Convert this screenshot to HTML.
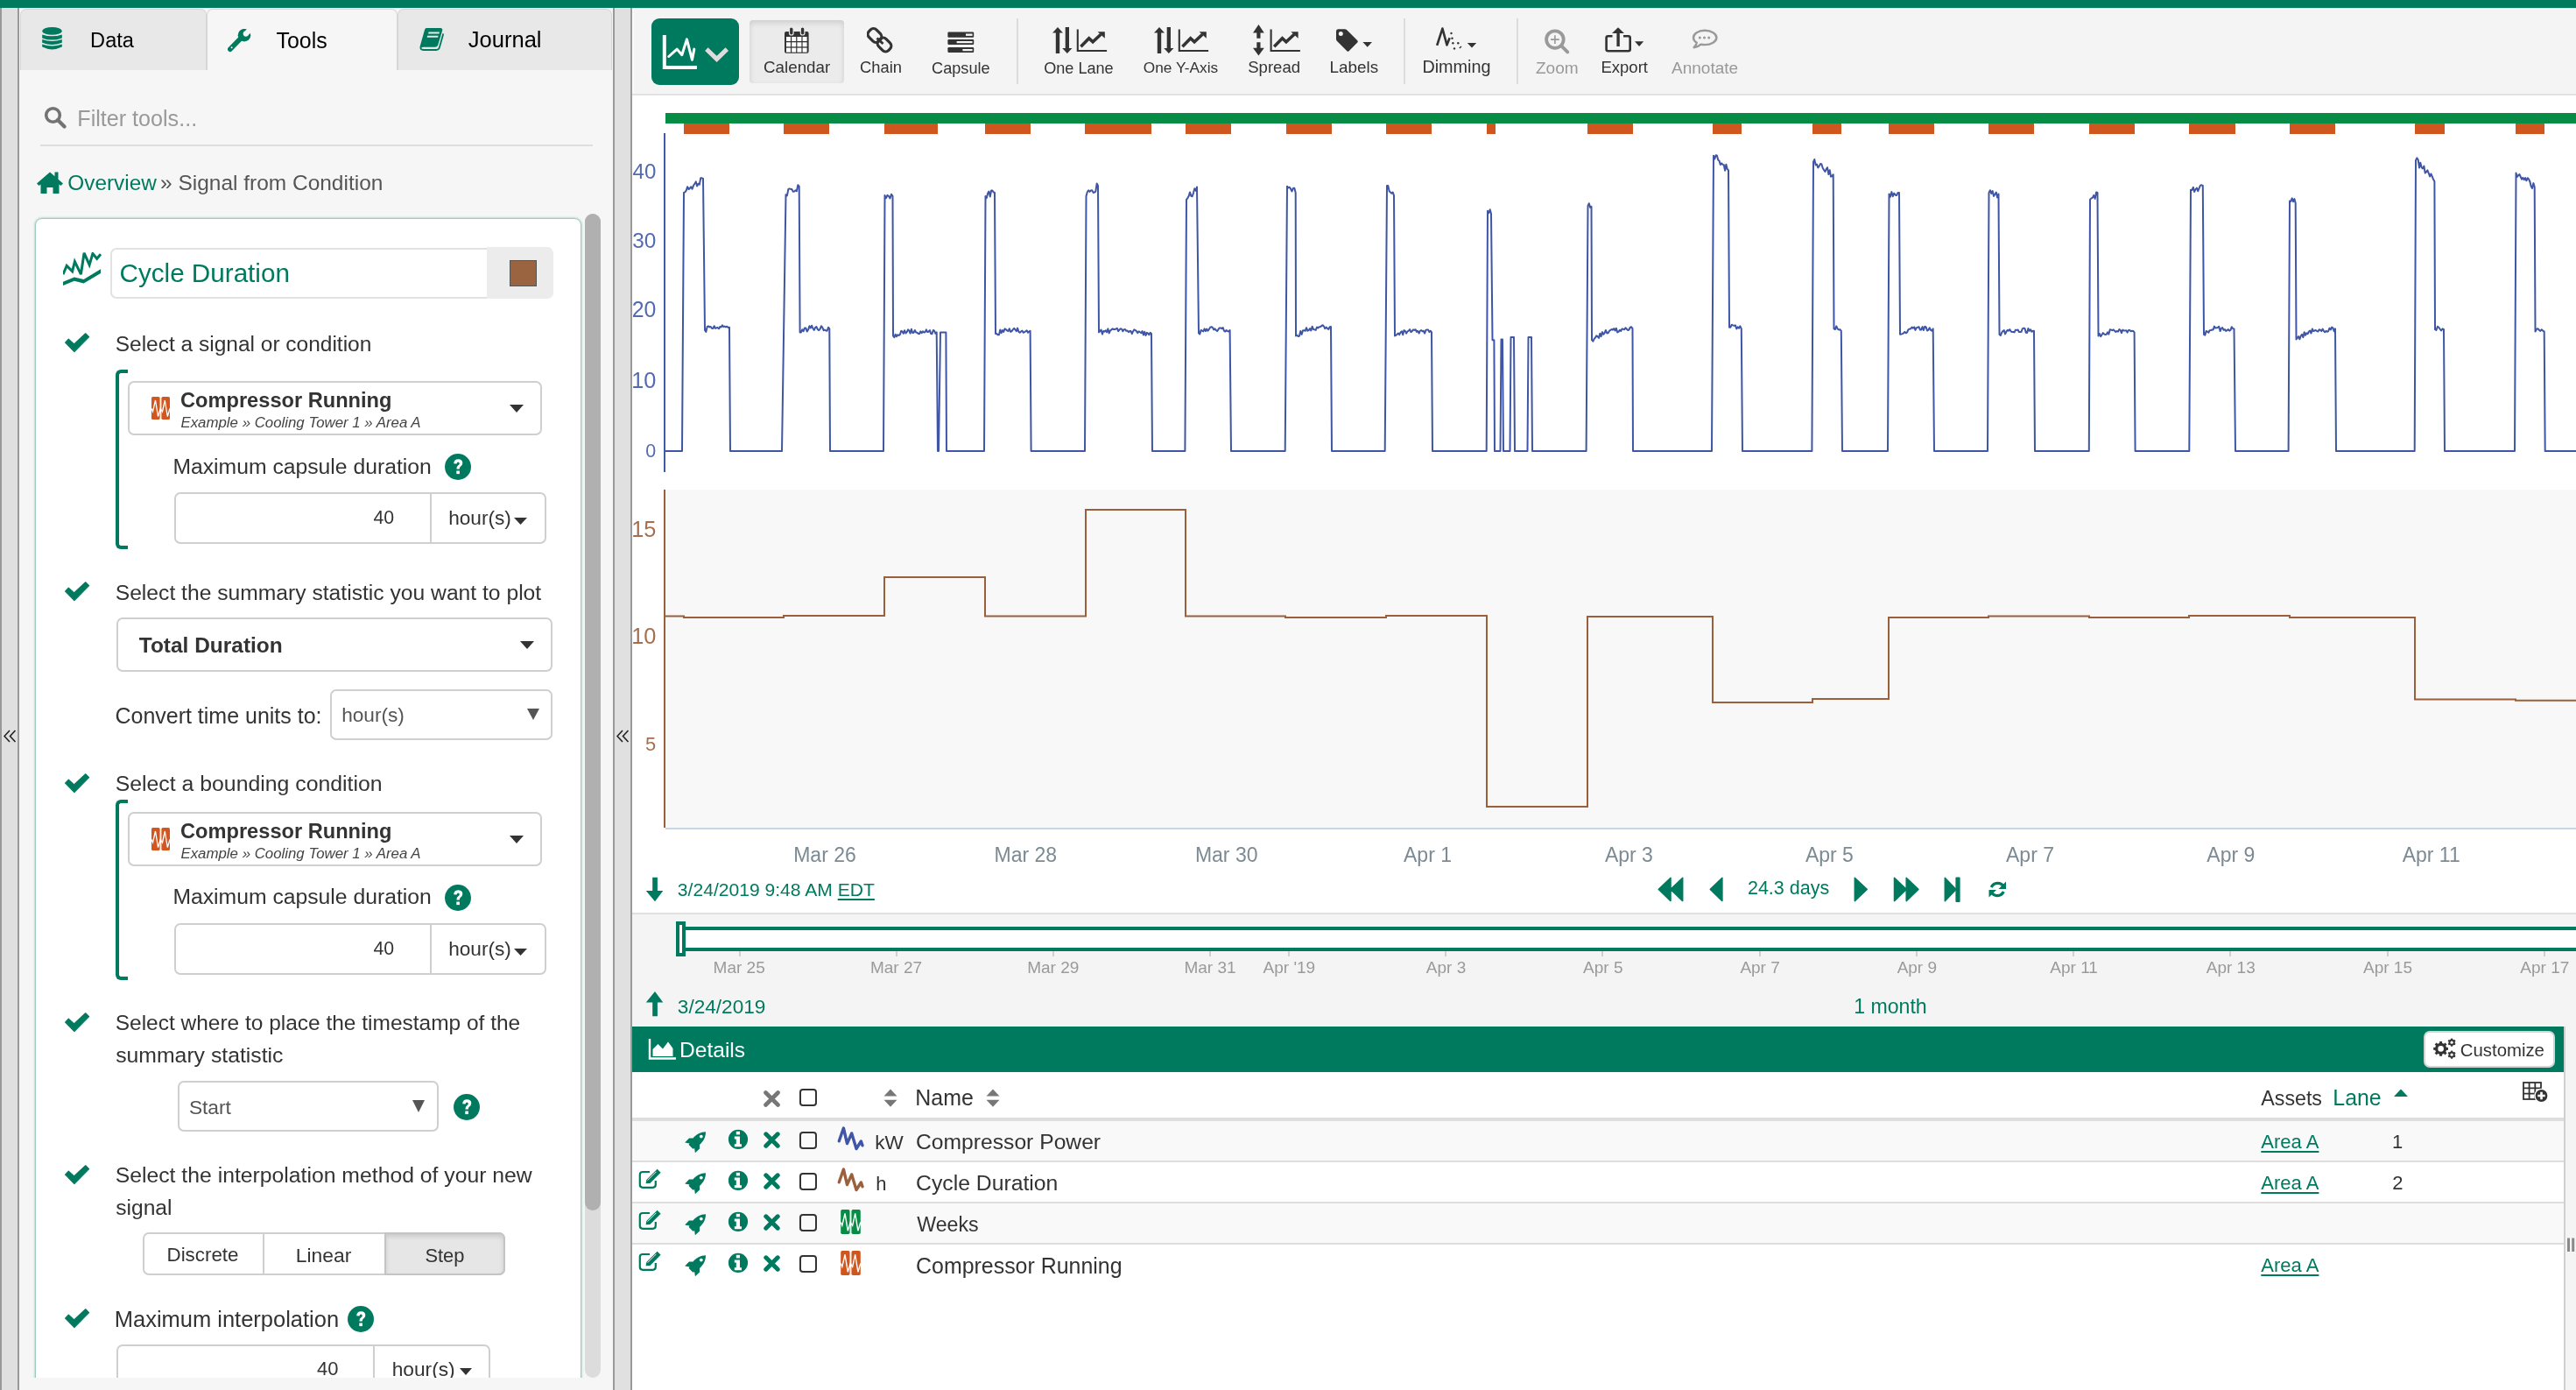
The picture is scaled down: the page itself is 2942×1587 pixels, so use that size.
<!DOCTYPE html>
<html><head><meta charset="utf-8"><title>Seeq</title>
<style>
html,body{margin:0;padding:0;}
body{width:2942px;height:1587px;overflow:hidden;position:relative;background:#fff;font-family:"Liberation Sans",sans-serif;}
</style></head><body>
<div style="position:absolute;left:0;top:0;width:2942px;height:1587px;will-change:transform;">
<div style="position:absolute;left:0px;top:0px;width:2942px;height:9px;background:#007a5e;"></div>
<div style="position:absolute;left:0px;top:9px;width:22px;height:1578px;background:#e0e0e0;border-left:2px solid #999;border-right:2px solid #999;box-sizing:border-box;"></div>
<svg style="position:absolute;left:4px;top:833px;" width="15" height="15" viewBox="0 0 15 15"><path d="M7 1 L1 7.5 L7 14 M13.5 1 L7.5 7.5 L13.5 14" fill="none" stroke="#222" stroke-width="1.6"/></svg>
<div style="position:absolute;left:22px;top:9px;width:678px;height:1578px;background:#f6f6f6;"></div>
<div style="position:absolute;left:700px;top:9px;width:22px;height:1578px;background:#e0e0e0;border-left:2px solid #999;border-right:2px solid #999;box-sizing:border-box;"></div>
<svg style="position:absolute;left:704px;top:833px;" width="15" height="15" viewBox="0 0 15 15"><path d="M7 1 L1 7.5 L7 14 M13.5 1 L7.5 7.5 L13.5 14" fill="none" stroke="#222" stroke-width="1.6"/></svg>
<div style="position:absolute;left:23px;top:10px;width:213px;height:71px;box-sizing:border-box;background:#e8e8e8;border:1px solid #d6d6d6;border-bottom:none;border-radius:7px 7px 0 0;"></div>
<div style="position:absolute;left:236px;top:10px;width:218px;height:71px;box-sizing:border-box;background:#f6f6f6;border:1px solid #d6d6d6;border-bottom:none;border-radius:7px 7px 0 0;"></div>
<div style="position:absolute;left:454px;top:10px;width:245px;height:71px;box-sizing:border-box;background:#e8e8e8;border:1px solid #d6d6d6;border-bottom:none;border-radius:7px 7px 0 0;"></div>
<div style="position:absolute;left:23px;top:80px;width:676px;height:2px;background:#f6f6f6;"></div>
<svg style="position:absolute;left:48px;top:31px;" width="23" height="27" viewBox="0 0 23 27"><ellipse cx="11.5" cy="4.4" rx="11.3" ry="4.3" fill="#007a5e"/><path d="M0.2 8.4 Q11.5 12.2 22.8 8.4 L22.8 12.4 Q11.5 16.8 0.2 12.4Z" fill="#007a5e"/><path d="M0.2 14 Q11.5 17.8 22.8 14 L22.8 17.8 Q11.5 22.2 0.2 17.8Z" fill="#007a5e"/><path d="M0.2 19.6 Q11.5 23.4 22.8 19.6 L22.8 22.6 Q11.5 28.2 0.2 22.6Z" fill="#007a5e"/></svg>
<div style="position:absolute;left:103.11px;top:35.04px;font-family:'Liberation Sans', sans-serif;font-size:23.57px;line-height:1;white-space:pre;color:#000;font-weight:normal;font-style:normal;">Data</div>
<svg style="position:absolute;left:260px;top:33px;overflow:hidden;" width="28" height="27" viewBox="0 0 28 27"><circle cx="19" cy="7.2" r="7.3" fill="#007a5e"/><circle cx="20.8" cy="5.6" r="3.1" fill="#f6f6f6"/><path d="M20.8 5.6 L28 -1.6" stroke="#f6f6f6" stroke-width="6"/><path d="M14 11.8 L2.8 23.2" stroke="#007a5e" stroke-width="5.6" stroke-linecap="round"/><circle cx="4.6" cy="21.2" r="1" fill="#f6f6f6"/></svg>
<div style="position:absolute;left:315.50px;top:33.88px;font-family:'Liberation Sans', sans-serif;font-size:24.95px;line-height:1;white-space:pre;color:#000;font-weight:normal;font-style:normal;">Tools</div>
<svg style="position:absolute;left:479px;top:32px;" width="29" height="26" viewBox="0 0 29 26"><path d="M8 0 L24.5 0 Q27 0.5 26 3.5 L21 20 Q20 21.8 18 21.8 L4 21.8 Q2 22 2.3 23.2 Q3 24 5 24 L19.5 24 Q21.5 24 22 22 L26.5 6 Q27.5 5.5 28 7.5 L23.5 23.2 Q22.3 26 19.5 26 L4.5 26 Q0 25.5 0.5 21.5 L6 2 Q6.6 0 8 0Z" fill="#007a5e"/><path d="M10.6 4.5 L23 4.5 L22.4 6.5 L10 6.5Z M9.2 8.7 L21.6 8.7 L21 10.7 L8.6 10.7Z" fill="#e8e8e8"/></svg>
<div style="position:absolute;left:534.74px;top:33.36px;font-family:'Liberation Sans', sans-serif;font-size:25.56px;line-height:1;white-space:pre;color:#000;font-weight:normal;font-style:normal;">Journal</div>
<svg style="position:absolute;left:50px;top:121px;" width="26" height="26" viewBox="0 0 26 26"><circle cx="10.5" cy="10.5" r="7.8" fill="none" stroke="#737373" stroke-width="3.6"/><path d="M16 16 L23.5 23.5" stroke="#737373" stroke-width="4.2" stroke-linecap="round"/></svg>
<div style="position:absolute;left:88.29px;top:122.72px;font-family:'Liberation Sans', sans-serif;font-size:25.14px;line-height:1;white-space:pre;color:#999;font-weight:normal;font-style:normal;">Filter tools...</div>
<div style="position:absolute;left:46px;top:165px;width:631px;height:2px;background:#dedede;"></div>
<svg style="position:absolute;left:41px;top:195px;" width="32" height="27" viewBox="0 0 32 27"><path d="M16 1.5 L1 14.5 L3.5 17 L5.5 15.4 L5.5 26 L12.5 26 L12.5 19 L19.5 19 L19.5 26 L26.5 26 L26.5 15.4 L28.5 17 L31 14.5 L25.5 9.7 L25.5 1.5 L21.5 1.5 L21.5 6.2Z" fill="#007a5e"/></svg>
<div style="position:absolute;left:77.33px;top:196.69px;font-family:'Liberation Sans', sans-serif;font-size:24.35px;line-height:1;white-space:pre;color:#007a5e;font-weight:normal;font-style:normal;">Overview</div>
<div style="position:absolute;left:183.02px;top:196.59px;font-family:'Liberation Sans', sans-serif;font-size:24.47px;line-height:1;white-space:pre;color:#555;font-weight:normal;font-style:normal;">» Signal from Condition</div>
<div style="position:absolute;left:0;top:0;width:2942px;height:1587px;clip-path:inset(240px 2242px 14px 22px);">
<div style="position:absolute;left:40px;top:249px;width:624px;height:1351px;box-sizing:border-box;background:#fff;border:1.5px solid #9bcdbf;border-radius:8px;box-shadow:0 0 2px 1px rgba(0,122,94,.22);"></div>
<div style="position:absolute;left:668px;top:244px;width:18px;height:1329px;box-sizing:border-box;background:#dcdcdc;border-radius:9px;"></div>
<div style="position:absolute;left:668px;top:244px;width:18px;height:1138px;box-sizing:border-box;background:#b0b0b0;border-radius:9px;"></div>
<svg style="position:absolute;left:72px;top:288px;" width="44" height="39" viewBox="0 0 44 39"><path d="M0 25.2 L4.2 15.4 L10.6 21.9 L13.4 10.6 L20.4 25.2 L24.1 0.8 L30.1 14.4 L33.9 1.6 L38.7 7.3 L43 2.2" fill="none" stroke="#007a5e" stroke-width="3" stroke-linejoin="miter" stroke-miterlimit="3"/><path d="M0 33.8 L12.8 28.4 L23.6 31.1 L43 19.2 L43 24 L23.6 35.4 L12.8 32.7 L0 38.1Z" fill="#007a5e"/></svg>
<div style="position:absolute;left:126px;top:283px;width:432px;height:58px;box-sizing:border-box;background:#fff;border:2px solid #e2e2e2;border-right:none;border-radius:7px 0 0 7px;"></div>
<div style="position:absolute;left:136.52px;top:297.40px;font-family:'Liberation Sans', sans-serif;font-size:29.65px;line-height:1;white-space:pre;color:#007a5e;font-weight:normal;font-style:normal;">Cycle Duration</div>
<div style="position:absolute;left:556px;top:282px;width:76px;height:59px;box-sizing:border-box;background:#ececec;border-radius:0 7px 7px 0;"></div>
<div style="position:absolute;left:582px;top:297px;width:31px;height:30px;box-sizing:border-box;background:#9b6441;border:1.5px solid #555;"></div>
<svg style="position:absolute;left:74px;top:380px;" width="29" height="23" viewBox="0 0 29 23"><path d="M0.6 11.1 L4.3 7.2 L10.6 13 L23.7 0.8 L27.6 4.6 L10.9 21.6Z" fill="#007a5e" stroke="#007a5e" stroke-width="1.2" stroke-linejoin="round"/></svg>
<div style="position:absolute;left:131.72px;top:381.07px;font-family:'Liberation Sans', sans-serif;font-size:24.49px;line-height:1;white-space:pre;color:#333;font-weight:normal;font-style:normal;">Select a signal or condition</div>
<div style="position:absolute;left:132px;top:421.5px;width:14px;height:205.5px;box-sizing:border-box;border:4px solid #007a5e;border-right:none;border-radius:6px 0 0 6px;"></div>
<div style="position:absolute;left:145.6px;top:435px;width:473.4px;height:62px;box-sizing:border-box;background:#fff;border:2px solid #cfcfcf;border-radius:7px;"></div>
<svg style="position:absolute;left:173px;top:453px;overflow:visible;" width="21" height="26" viewBox="0 0 21 26"><rect x="0" y="0" width="9.6" height="26" rx="1.6" fill="#d2561e"/><rect x="11.4" y="0" width="9.6" height="26" rx="1.6" fill="#d2561e"/><path d="M0 13.5 L1.5 17 L4.5 4 L7.5 22.5 L10.2 13.5 L12.5 17 L15.3 4 L18.3 22.5 L21 13.5" fill="none" stroke="#fff" stroke-width="1.3"/></svg>
<div style="position:absolute;left:206.06px;top:445.81px;font-family:'Liberation Sans', sans-serif;font-size:23.61px;line-height:1;white-space:pre;color:#333;font-weight:bold;font-style:normal;">Compressor Running</div>
<div style="position:absolute;left:206.49px;top:475.35px;font-family:'Liberation Sans', sans-serif;font-size:16.84px;line-height:1;white-space:pre;color:#444;font-weight:normal;font-style:italic;">Example » Cooling Tower 1 » Area A</div>
<svg style="position:absolute;left:582px;top:461.5px;" width="16" height="9" viewBox="0 0 16 9"><path d="M0 0 L16 0 L8.0 9Z" fill="#333"/></svg>
<div style="position:absolute;left:197.42px;top:521.48px;font-family:'Liberation Sans', sans-serif;font-size:24.72px;line-height:1;white-space:pre;color:#333;font-weight:normal;font-style:normal;">Maximum capsule duration</div>
<svg style="position:absolute;left:508px;top:518px;" width="30" height="30" viewBox="0 0 30 30"><circle cx="15" cy="15" r="15" fill="#007a5e"/><path d="M10.2 11.2 Q10.5 6.3 15.3 6.3 Q20.3 6.5 20.3 10.8 Q20.3 13.6 17.6 15 Q16.8 15.5 16.8 17.5 L13.4 17.5 Q13.3 14.2 15.6 13 Q16.8 12.3 16.8 11 Q16.6 9.5 15.2 9.5 Q13.7 9.6 13.6 11.4Z" fill="#fff"/><rect x="13.3" y="19.5" width="3.6" height="3.6" fill="#fff"/></svg>
<div style="position:absolute;left:199px;top:562px;width:425px;height:59px;box-sizing:border-box;background:#fff;border:2px solid #cfcfcf;border-radius:7px;"></div>
<div style="position:absolute;left:491px;top:562px;width:2px;height:59px;background:#cfcfcf;"></div>
<div style="position:absolute;left:426.47px;top:581.17px;font-family:'Liberation Sans', sans-serif;font-size:21.30px;line-height:1;white-space:pre;color:#333;font-weight:normal;font-style:normal;">40</div>
<div style="position:absolute;left:512.14px;top:580.02px;font-family:'Liberation Sans', sans-serif;font-size:22.66px;line-height:1;white-space:pre;color:#333;font-weight:normal;font-style:normal;">hour(s)</div>
<svg style="position:absolute;left:587px;top:590.5px;" width="15" height="8" viewBox="0 0 15 8"><path d="M0 0 L15 0 L7.5 8Z" fill="#333"/></svg>
<svg style="position:absolute;left:74px;top:663.5px;" width="29" height="23" viewBox="0 0 29 23"><path d="M0.6 11.1 L4.3 7.2 L10.6 13 L23.7 0.8 L27.6 4.6 L10.9 21.6Z" fill="#007a5e" stroke="#007a5e" stroke-width="1.2" stroke-linejoin="round"/></svg>
<div style="position:absolute;left:131.71px;top:664.72px;font-family:'Liberation Sans', sans-serif;font-size:24.67px;line-height:1;white-space:pre;color:#333;font-weight:normal;font-style:normal;">Select the summary statistic you want to plot</div>
<div style="position:absolute;left:133px;top:705px;width:498px;height:62px;box-sizing:border-box;background:#fff;border:2px solid #cfcfcf;border-radius:7px;"></div>
<div style="position:absolute;left:158.76px;top:724.89px;font-family:'Liberation Sans', sans-serif;font-size:24.47px;line-height:1;white-space:pre;color:#333;font-weight:bold;font-style:normal;">Total Duration</div>
<svg style="position:absolute;left:594px;top:732px;" width="16" height="9" viewBox="0 0 16 9"><path d="M0 0 L16 0 L8.0 9Z" fill="#333"/></svg>
<div style="position:absolute;left:131.45px;top:804.64px;font-family:'Liberation Sans', sans-serif;font-size:24.99px;line-height:1;white-space:pre;color:#333;font-weight:normal;font-style:normal;">Convert time units to:</div>
<div style="position:absolute;left:377px;top:787px;width:254px;height:58px;box-sizing:border-box;background:#fff;border:2px solid #cfcfcf;border-radius:7px;"></div>
<div style="position:absolute;left:390.14px;top:805.32px;font-family:'Liberation Sans', sans-serif;font-size:22.66px;line-height:1;white-space:pre;color:#555;font-weight:normal;font-style:normal;">hour(s)</div>
<svg style="position:absolute;left:601.5px;top:809px;" width="14" height="13" viewBox="0 0 14 13"><path d="M0 0 L14 0 L7.0 13Z" fill="#555"/></svg>
<svg style="position:absolute;left:74px;top:883px;" width="29" height="23" viewBox="0 0 29 23"><path d="M0.6 11.1 L4.3 7.2 L10.6 13 L23.7 0.8 L27.6 4.6 L10.9 21.6Z" fill="#007a5e" stroke="#007a5e" stroke-width="1.2" stroke-linejoin="round"/></svg>
<div style="position:absolute;left:131.71px;top:882.99px;font-family:'Liberation Sans', sans-serif;font-size:24.82px;line-height:1;white-space:pre;color:#333;font-weight:normal;font-style:normal;">Select a bounding condition</div>
<div style="position:absolute;left:132px;top:913.3px;width:14px;height:205.70000000000005px;box-sizing:border-box;border:4px solid #007a5e;border-right:none;border-radius:6px 0 0 6px;"></div>
<div style="position:absolute;left:145.6px;top:927px;width:473.4px;height:62px;box-sizing:border-box;background:#fff;border:2px solid #cfcfcf;border-radius:7px;"></div>
<svg style="position:absolute;left:173px;top:945px;overflow:visible;" width="21" height="26" viewBox="0 0 21 26"><rect x="0" y="0" width="9.6" height="26" rx="1.6" fill="#d2561e"/><rect x="11.4" y="0" width="9.6" height="26" rx="1.6" fill="#d2561e"/><path d="M0 13.5 L1.5 17 L4.5 4 L7.5 22.5 L10.2 13.5 L12.5 17 L15.3 4 L18.3 22.5 L21 13.5" fill="none" stroke="#fff" stroke-width="1.3"/></svg>
<div style="position:absolute;left:206.06px;top:937.81px;font-family:'Liberation Sans', sans-serif;font-size:23.61px;line-height:1;white-space:pre;color:#333;font-weight:bold;font-style:normal;">Compressor Running</div>
<div style="position:absolute;left:206.49px;top:967.35px;font-family:'Liberation Sans', sans-serif;font-size:16.84px;line-height:1;white-space:pre;color:#444;font-weight:normal;font-style:italic;">Example » Cooling Tower 1 » Area A</div>
<svg style="position:absolute;left:582px;top:953.5px;" width="16" height="9" viewBox="0 0 16 9"><path d="M0 0 L16 0 L8.0 9Z" fill="#333"/></svg>
<div style="position:absolute;left:197.42px;top:1012.28px;font-family:'Liberation Sans', sans-serif;font-size:24.72px;line-height:1;white-space:pre;color:#333;font-weight:normal;font-style:normal;">Maximum capsule duration</div>
<svg style="position:absolute;left:508px;top:1010px;" width="30" height="30" viewBox="0 0 30 30"><circle cx="15" cy="15" r="15" fill="#007a5e"/><path d="M10.2 11.2 Q10.5 6.3 15.3 6.3 Q20.3 6.5 20.3 10.8 Q20.3 13.6 17.6 15 Q16.8 15.5 16.8 17.5 L13.4 17.5 Q13.3 14.2 15.6 13 Q16.8 12.3 16.8 11 Q16.6 9.5 15.2 9.5 Q13.7 9.6 13.6 11.4Z" fill="#fff"/><rect x="13.3" y="19.5" width="3.6" height="3.6" fill="#fff"/></svg>
<div style="position:absolute;left:199px;top:1054px;width:425px;height:59px;box-sizing:border-box;background:#fff;border:2px solid #cfcfcf;border-radius:7px;"></div>
<div style="position:absolute;left:491px;top:1054px;width:2px;height:59px;background:#cfcfcf;"></div>
<div style="position:absolute;left:426.47px;top:1073.17px;font-family:'Liberation Sans', sans-serif;font-size:21.30px;line-height:1;white-space:pre;color:#333;font-weight:normal;font-style:normal;">40</div>
<div style="position:absolute;left:512.14px;top:1072.02px;font-family:'Liberation Sans', sans-serif;font-size:22.66px;line-height:1;white-space:pre;color:#333;font-weight:normal;font-style:normal;">hour(s)</div>
<svg style="position:absolute;left:587px;top:1082.5px;" width="15" height="8" viewBox="0 0 15 8"><path d="M0 0 L15 0 L7.5 8Z" fill="#333"/></svg>
<svg style="position:absolute;left:74px;top:1156px;" width="29" height="23" viewBox="0 0 29 23"><path d="M0.6 11.1 L4.3 7.2 L10.6 13 L23.7 0.8 L27.6 4.6 L10.9 21.6Z" fill="#007a5e" stroke="#007a5e" stroke-width="1.2" stroke-linejoin="round"/></svg>
<div style="position:absolute;left:131.72px;top:1156.28px;font-family:'Liberation Sans', sans-serif;font-size:24.48px;line-height:1;white-space:pre;color:#333;font-weight:normal;font-style:normal;">Select where to place the timestamp of the</div>
<div style="position:absolute;left:132.20px;top:1192.53px;font-family:'Liberation Sans', sans-serif;font-size:24.77px;line-height:1;white-space:pre;color:#333;font-weight:normal;font-style:normal;">summary statistic</div>
<div style="position:absolute;left:203px;top:1234px;width:298px;height:58px;box-sizing:border-box;background:#fff;border:2px solid #cfcfcf;border-radius:7px;"></div>
<div style="position:absolute;left:215.89px;top:1253.24px;font-family:'Liberation Sans', sans-serif;font-size:22.76px;line-height:1;white-space:pre;color:#555;font-weight:normal;font-style:normal;">Start</div>
<svg style="position:absolute;left:471px;top:1256px;" width="14" height="14" viewBox="0 0 14 14"><path d="M0 0 L14 0 L7.0 14Z" fill="#555"/></svg>
<svg style="position:absolute;left:518px;top:1249px;" width="30" height="30" viewBox="0 0 30 30"><circle cx="15" cy="15" r="15" fill="#007a5e"/><path d="M10.2 11.2 Q10.5 6.3 15.3 6.3 Q20.3 6.5 20.3 10.8 Q20.3 13.6 17.6 15 Q16.8 15.5 16.8 17.5 L13.4 17.5 Q13.3 14.2 15.6 13 Q16.8 12.3 16.8 11 Q16.6 9.5 15.2 9.5 Q13.7 9.6 13.6 11.4Z" fill="#fff"/><rect x="13.3" y="19.5" width="3.6" height="3.6" fill="#fff"/></svg>
<svg style="position:absolute;left:74px;top:1330px;" width="29" height="23" viewBox="0 0 29 23"><path d="M0.6 11.1 L4.3 7.2 L10.6 13 L23.7 0.8 L27.6 4.6 L10.9 21.6Z" fill="#007a5e" stroke="#007a5e" stroke-width="1.2" stroke-linejoin="round"/></svg>
<div style="position:absolute;left:131.71px;top:1330.05px;font-family:'Liberation Sans', sans-serif;font-size:24.75px;line-height:1;white-space:pre;color:#333;font-weight:normal;font-style:normal;">Select the interpolation method of your new</div>
<div style="position:absolute;left:132.21px;top:1366.96px;font-family:'Liberation Sans', sans-serif;font-size:24.62px;line-height:1;white-space:pre;color:#333;font-weight:normal;font-style:normal;">signal</div>
<div style="position:absolute;left:163px;top:1407px;width:414px;height:49px;box-sizing:border-box;background:#fff;border:2px solid #cfcfcf;border-radius:7px;"></div>
<div style="position:absolute;left:439px;top:1407px;width:138px;height:49px;box-sizing:border-box;background:#e6e6e6;border:2px solid #c4c4c4;border-radius:0 7px 7px 0;box-shadow:inset 0 3px 5px rgba(0,0,0,.12);"></div>
<div style="position:absolute;left:300px;top:1407px;width:2px;height:49px;background:#cfcfcf;"></div>
<div style="position:absolute;left:190.51px;top:1422.07px;font-family:'Liberation Sans', sans-serif;font-size:22.36px;line-height:1;white-space:pre;color:#333;font-weight:normal;font-style:normal;">Discrete</div>
<div style="position:absolute;left:337.77px;top:1421.66px;font-family:'Liberation Sans', sans-serif;font-size:22.85px;line-height:1;white-space:pre;color:#333;font-weight:normal;font-style:normal;">Linear</div>
<div style="position:absolute;left:485.43px;top:1422.50px;font-family:'Liberation Sans', sans-serif;font-size:21.86px;line-height:1;white-space:pre;color:#333;font-weight:normal;font-style:normal;">Step</div>
<svg style="position:absolute;left:74px;top:1494px;" width="29" height="23" viewBox="0 0 29 23"><path d="M0.6 11.1 L4.3 7.2 L10.6 13 L23.7 0.8 L27.6 4.6 L10.9 21.6Z" fill="#007a5e" stroke="#007a5e" stroke-width="1.2" stroke-linejoin="round"/></svg>
<div style="position:absolute;left:130.76px;top:1493.93px;font-family:'Liberation Sans', sans-serif;font-size:25.49px;line-height:1;white-space:pre;color:#333;font-weight:normal;font-style:normal;">Maximum interpolation</div>
<svg style="position:absolute;left:397px;top:1491px;" width="30" height="30" viewBox="0 0 30 30"><circle cx="15" cy="15" r="15" fill="#007a5e"/><path d="M10.2 11.2 Q10.5 6.3 15.3 6.3 Q20.3 6.5 20.3 10.8 Q20.3 13.6 17.6 15 Q16.8 15.5 16.8 17.5 L13.4 17.5 Q13.3 14.2 15.6 13 Q16.8 12.3 16.8 11 Q16.6 9.5 15.2 9.5 Q13.7 9.6 13.6 11.4Z" fill="#fff"/><rect x="13.3" y="19.5" width="3.6" height="3.6" fill="#fff"/></svg>
<div style="position:absolute;left:133px;top:1535px;width:427px;height:65px;box-sizing:border-box;background:#fff;border:2px solid #cfcfcf;border-radius:7px;"></div>
<div style="position:absolute;left:426px;top:1535px;width:2px;height:65px;background:#cfcfcf;"></div>
<div style="position:absolute;left:362.06px;top:1552.41px;font-family:'Liberation Sans', sans-serif;font-size:21.97px;line-height:1;white-space:pre;color:#333;font-weight:normal;font-style:normal;">40</div>
<div style="position:absolute;left:447.63px;top:1551.74px;font-family:'Liberation Sans', sans-serif;font-size:22.75px;line-height:1;white-space:pre;color:#333;font-weight:normal;font-style:normal;">hour(s)</div>
<svg style="position:absolute;left:525px;top:1562px;" width="14" height="8" viewBox="0 0 14 8"><path d="M0 0 L14 0 L7.0 8Z" fill="#333"/></svg>
</div>
<div style="position:absolute;left:722px;top:9px;width:2220px;height:98px;background:#f4f4f4;"></div>
<div style="position:absolute;left:722px;top:9px;width:2220px;height:1px;background:#e6e6e6;"></div>
<div style="position:absolute;left:722px;top:107px;width:2220px;height:2px;background:#e2e2e2;"></div>
<div style="position:absolute;left:722px;top:10px;width:2px;height:97px;background:#fbfbfb;"></div>
<div style="position:absolute;left:744px;top:21px;width:100px;height:76px;box-sizing:border-box;background:#007a5e;border-radius:9px;"></div>
<svg style="position:absolute;left:744px;top:21px;" width="100" height="76" viewBox="0 0 100 76"><path d="M14.8 19 L14.8 56 L52 56" fill="none" stroke="#fff" stroke-width="4"/><path d="M19.8 43.5 L29.2 35.1 L34.8 41.7 L40.4 23.9 L46.5 47.3 L48.8 35.1" fill="none" stroke="#fff" stroke-width="3" stroke-linejoin="round" stroke-linecap="round"/><path d="M62.9 35.1 L74.6 46.4 L86.3 35.1" fill="none" stroke="#ddd" stroke-width="5"/></svg>
<div style="position:absolute;left:856px;top:23px;width:108px;height:72px;box-sizing:border-box;background:#ebebeb;border-radius:4px;box-shadow:inset 0 3px 6px rgba(0,0,0,.13);"></div>
<svg style="position:absolute;left:896px;top:31px;" width="28" height="30" viewBox="0 0 28 30"><rect x="0" y="5" width="27.6" height="24.7" rx="2" fill="#333"/><rect x="5.5" y="0" width="4.6" height="9" rx="2.3" fill="#333" stroke="#ebebeb" stroke-width="1.2"/><rect x="18.3" y="0" width="4.6" height="9" rx="2.3" fill="#333" stroke="#ebebeb" stroke-width="1.2"/><rect x="2.0" y="11.0" width="5" height="5" fill="#fff"/><rect x="8.2" y="11.0" width="5" height="5" fill="#fff"/><rect x="14.4" y="11.0" width="5" height="5" fill="#fff"/><rect x="20.6" y="11.0" width="5" height="5" fill="#fff"/><rect x="2.0" y="17.3" width="5" height="5" fill="#fff"/><rect x="8.2" y="17.3" width="5" height="5" fill="#fff"/><rect x="14.4" y="17.3" width="5" height="5" fill="#fff"/><rect x="20.6" y="17.3" width="5" height="5" fill="#fff"/><rect x="2.0" y="23.6" width="5" height="5" fill="#fff"/><rect x="8.2" y="23.6" width="5" height="5" fill="#fff"/><rect x="14.4" y="23.6" width="5" height="5" fill="#fff"/><rect x="20.6" y="23.6" width="5" height="5" fill="#fff"/></svg>
<div style="position:absolute;left:872.06px;top:68.11px;font-family:'Liberation Sans', sans-serif;font-size:18.77px;line-height:1;white-space:pre;color:#333;font-weight:normal;font-style:normal;">Calendar</div>
<svg style="position:absolute;left:990px;top:30px;" width="31" height="31" viewBox="0 0 31 31"><g fill="none" stroke="#333" stroke-width="3.2"><rect x="3" y="2.5" width="12" height="16" rx="5" transform="rotate(-45 9 10.5)"/><rect x="14" y="13" width="12" height="16" rx="5" transform="rotate(-45 20 21)"/></g><path d="M11.5 13.5 L18.5 20" stroke="#333" stroke-width="3"/></svg>
<div style="position:absolute;left:982.08px;top:68.47px;font-family:'Liberation Sans', sans-serif;font-size:18.35px;line-height:1;white-space:pre;color:#333;font-weight:normal;font-style:normal;">Chain</div>
<svg style="position:absolute;left:1082px;top:36px;" width="31" height="25" viewBox="0 0 31 25"><rect x="0.4" y="0.5" width="29.8" height="6.2" rx="1.2" fill="#333"/><rect x="0.4" y="9" width="29.8" height="6" rx="1.2" fill="#333"/><rect x="0.4" y="18" width="29.8" height="6" rx="1.2" fill="#333"/><rect x="21" y="2.5" width="7.6" height="2.4" fill="#f4f4f4"/><rect x="10.6" y="11" width="18" height="2.2" fill="#f4f4f4"/><rect x="17.4" y="20" width="11.2" height="2.2" fill="#f4f4f4"/></svg>
<div style="position:absolute;left:1064.09px;top:68.64px;font-family:'Liberation Sans', sans-serif;font-size:18.14px;line-height:1;white-space:pre;color:#333;font-weight:normal;font-style:normal;">Capsule</div>
<div style="position:absolute;left:1161px;top:21px;width:2px;height:75px;background:#dcdcdc;"></div>
<svg style="position:absolute;left:1202.2px;top:31px;overflow:visible;" width="70" height="35" viewBox="0 0 70 35"><path d="M0 6.4 L6 0 L12 6.4 L8.2 6.4 L8.2 30.1 L3.8 30.1 L3.8 6.4Z" fill="#333"/><path d="M14.7 0 L19 0 L19 23.9 L22.5 23.9 L16.85 30.1 L11.2 23.9 L14.7 23.9Z" fill="#333"/><path d="M28.8 2.6 L28.8 27 L62.099999999999994 27" fill="none" stroke="#333" stroke-width="2.1"/><path d="M32.4 22.2 L41.7 12.8 L46.1 16.9 L55.3 8.3" fill="none" stroke="#333" stroke-width="3.6"/><path d="M51.6 5.3 L59.8 5.3 L59.8 12.8Z" fill="#333"/></svg>
<div style="position:absolute;left:1192.28px;top:68.70px;font-family:'Liberation Sans', sans-serif;font-size:18.07px;line-height:1;white-space:pre;color:#333;font-weight:normal;font-style:normal;">One Lane</div>
<svg style="position:absolute;left:1318.4px;top:31px;overflow:visible;" width="70" height="35" viewBox="0 0 70 35"><path d="M0 6.4 L6 0 L12 6.4 L8.2 6.4 L8.2 30.1 L3.8 30.1 L3.8 6.4Z" fill="#333"/><path d="M14.7 0 L19 0 L19 23.9 L22.5 23.9 L16.85 30.1 L11.2 23.9 L14.7 23.9Z" fill="#333"/><path d="M28.8 2.6 L28.8 27 L62.099999999999994 27" fill="none" stroke="#333" stroke-width="2.1"/><path d="M32.4 22.2 L41.7 12.8 L46.1 16.9 L55.3 8.3" fill="none" stroke="#333" stroke-width="3.6"/><path d="M51.6 5.3 L59.8 5.3 L59.8 12.8Z" fill="#333"/></svg>
<div style="position:absolute;left:1305.81px;top:69.39px;font-family:'Liberation Sans', sans-serif;font-size:17.26px;line-height:1;white-space:pre;color:#333;font-weight:normal;font-style:normal;">One Y-Axis</div>
<svg style="position:absolute;left:1431.4px;top:31px;overflow:visible;" width="70" height="35" viewBox="0 0 70 35"><path d="M0 6.5 L6.4 -3 L12.8 6.5 L8.5 6.5 L8.5 12.8 L4.3 12.8 L4.3 6.5Z" fill="#333"/><path d="M4.3 17.2 L8.5 17.2 L8.5 23.7 L12.8 23.7 L6.4 32.5 L0 23.7 L4.3 23.7Z" fill="#333"/><path d="M20.6 2.6 L20.6 27 L53.9 27" fill="none" stroke="#333" stroke-width="2.1"/><path d="M24.200000000000003 22.2 L33.5 12.8 L37.900000000000006 16.9 L47.1 8.3" fill="none" stroke="#333" stroke-width="3.6"/><path d="M43.400000000000006 5.3 L51.6 5.3 L51.6 12.8Z" fill="#333"/></svg>
<div style="position:absolute;left:1425.26px;top:68.31px;font-family:'Liberation Sans', sans-serif;font-size:18.54px;line-height:1;white-space:pre;color:#333;font-weight:normal;font-style:normal;">Spread</div>
<svg style="position:absolute;left:1525px;top:33px;" width="44" height="27" viewBox="0 0 44 27"><path d="M1 3 Q1 0.3 3.7 0.3 L10.5 0.3 Q12.3 0.3 13.5 1.5 L25.3 13.3 Q26.3 14.5 25.3 15.6 L15.6 25.3 Q14.5 26.3 13.3 25.3 L1.8 13.8 Q1 13 1 11.3Z" fill="#333"/><circle cx="6.3" cy="5.6" r="2.5" fill="#f4f4f4"/><path d="M31.4 15 L42 15 L36.7 20.7Z" fill="#333"/></svg>
<div style="position:absolute;left:1518.49px;top:68.04px;font-family:'Liberation Sans', sans-serif;font-size:18.86px;line-height:1;white-space:pre;color:#333;font-weight:normal;font-style:normal;">Labels</div>
<div style="position:absolute;left:1603px;top:21px;width:2px;height:75px;background:#dcdcdc;"></div>
<svg style="position:absolute;left:1640px;top:31px;" width="48" height="30" viewBox="0 0 48 30"><path d="M1.2 20.8 L7.4 1.6 L12.5 20.4 L15.6 12.2" fill="none" stroke="#333" stroke-width="2.6" stroke-linejoin="round"/><g fill="#333"><circle cx="17.5" cy="7" r="1.2"/><circle cx="18.5" cy="12.8" r="1.2"/><circle cx="19.4" cy="18.2" r="1.2"/><circle cx="25.3" cy="18.2" r="1.2"/><circle cx="21" cy="24.4" r="1.2"/><path d="M26.8 24 L29 22" stroke="#333" stroke-width="1.4"/></g><path d="M35.8 18 L46.2 18 L41 23.5Z" fill="#333"/></svg>
<div style="position:absolute;left:1624.41px;top:67.22px;font-family:'Liberation Sans', sans-serif;font-size:19.82px;line-height:1;white-space:pre;color:#333;font-weight:normal;font-style:normal;">Dimming</div>
<div style="position:absolute;left:1732px;top:21px;width:2px;height:75px;background:#dcdcdc;"></div>
<svg style="position:absolute;left:1762px;top:31px;" width="31" height="31" viewBox="0 0 31 31"><circle cx="13.9" cy="14.1" r="9.8" fill="none" stroke="#999" stroke-width="3.8"/><path d="M13.9 9.3 L13.9 19 M9 14.1 L18.8 14.1" stroke="#999" stroke-width="1.6"/><path d="M21.5 21.7 L28.2 28.4" stroke="#999" stroke-width="3.8" stroke-linecap="round"/></svg>
<div style="position:absolute;left:1753.93px;top:67.85px;font-family:'Liberation Sans', sans-serif;font-size:19.08px;line-height:1;white-space:pre;color:#999;font-weight:normal;font-style:normal;">Zoom</div>
<svg style="position:absolute;left:1833px;top:30px;" width="46" height="30" viewBox="0 0 46 30"><path d="M8.5 11.2 L3.6 11.2 Q1.6 11.2 1.6 13.2 L1.6 26.3 Q1.6 28.3 3.6 28.3 L26.7 28.3 Q28.7 28.3 28.7 26.3 L28.7 13.2 Q28.7 11.2 26.7 11.2 L21 11.2" fill="none" stroke="#333" stroke-width="2.6"/><path d="M13.4 23 L13.4 8 L8 8 L15 1.3 L22 8 L16.8 8 L16.8 23Z" fill="#333"/><path d="M34 17.3 L44.2 17.3 L39.1 23Z" fill="#333"/></svg>
<div style="position:absolute;left:1828.52px;top:68.35px;font-family:'Liberation Sans', sans-serif;font-size:18.49px;line-height:1;white-space:pre;color:#333;font-weight:normal;font-style:normal;">Export</div>
<svg style="position:absolute;left:1932px;top:33px;" width="31" height="24" viewBox="0 0 31 24"><path d="M15 1.8 C7.5 1.8 2 5.6 2 10 C2 12.5 3.5 14.3 5.8 15.7 C5.5 18 4 19.8 2.6 21.2 C6 21 8.7 19.3 10.6 17.6 C12 17.9 13.5 18.1 15 18.1 C22.5 18.1 28.4 14.4 28.4 10 C28.4 5.6 22.5 1.8 15 1.8Z" fill="none" stroke="#999" stroke-width="2.4" stroke-linejoin="round"/><circle cx="9.3" cy="10" r="1.5" fill="#999"/><circle cx="14.5" cy="10" r="1.5" fill="#999"/><circle cx="19.7" cy="10" r="1.5" fill="#999"/></svg>
<div style="position:absolute;left:1909.00px;top:67.89px;font-family:'Liberation Sans', sans-serif;font-size:19.03px;line-height:1;white-space:pre;color:#999;font-weight:normal;font-style:normal;">Annotate</div>
<div style="position:absolute;left:760px;top:129px;width:2182px;height:12px;background:#078c45;"></div>
<div style="position:absolute;left:781px;top:141px;width:52px;height:12px;background:#d0561f;"></div>
<div style="position:absolute;left:895px;top:141px;width:52px;height:12px;background:#d0561f;"></div>
<div style="position:absolute;left:1010px;top:141px;width:61px;height:12px;background:#d0561f;"></div>
<div style="position:absolute;left:1125px;top:141px;width:52px;height:12px;background:#d0561f;"></div>
<div style="position:absolute;left:1239px;top:141px;width:76px;height:12px;background:#d0561f;"></div>
<div style="position:absolute;left:1354px;top:141px;width:52px;height:12px;background:#d0561f;"></div>
<div style="position:absolute;left:1469px;top:141px;width:52px;height:12px;background:#d0561f;"></div>
<div style="position:absolute;left:1583px;top:141px;width:52px;height:12px;background:#d0561f;"></div>
<div style="position:absolute;left:1698px;top:141px;width:10px;height:12px;background:#d0561f;"></div>
<div style="position:absolute;left:1813px;top:141px;width:52px;height:12px;background:#d0561f;"></div>
<div style="position:absolute;left:1956px;top:141px;width:33px;height:12px;background:#d0561f;"></div>
<div style="position:absolute;left:2070px;top:141px;width:33px;height:12px;background:#d0561f;"></div>
<div style="position:absolute;left:2157px;top:141px;width:52px;height:12px;background:#d0561f;"></div>
<div style="position:absolute;left:2271px;top:141px;width:52px;height:12px;background:#d0561f;"></div>
<div style="position:absolute;left:2386px;top:141px;width:52px;height:12px;background:#d0561f;"></div>
<div style="position:absolute;left:2500px;top:141px;width:53px;height:12px;background:#d0561f;"></div>
<div style="position:absolute;left:2615px;top:141px;width:52px;height:12px;background:#d0561f;"></div>
<div style="position:absolute;left:2758px;top:141px;width:34px;height:12px;background:#d0561f;"></div>
<div style="position:absolute;left:2873px;top:141px;width:33px;height:12px;background:#d0561f;"></div>
<div style="position:absolute;left:758px;top:152px;width:2px;height:387px;background:#3f5aa8;"></div>
<div style="position:absolute;left:722.52px;top:183.56px;font-family:'Liberation Sans', sans-serif;font-size:24.14px;line-height:1;white-space:pre;color:#3f5aa8;font-weight:normal;font-style:normal;opacity:.9;">40</div>
<div style="position:absolute;left:722.27px;top:262.87px;font-family:'Liberation Sans', sans-serif;font-size:24.38px;line-height:1;white-space:pre;color:#3f5aa8;font-weight:normal;font-style:normal;opacity:.9;">30</div>
<div style="position:absolute;left:721.76px;top:341.96px;font-family:'Liberation Sans', sans-serif;font-size:24.85px;line-height:1;white-space:pre;color:#3f5aa8;font-weight:normal;font-style:normal;opacity:.9;">20</div>
<div style="position:absolute;left:721.23px;top:421.55px;font-family:'Liberation Sans', sans-serif;font-size:25.34px;line-height:1;white-space:pre;color:#3f5aa8;font-weight:normal;font-style:normal;opacity:.9;">10</div>
<div style="position:absolute;left:737.36px;top:504.86px;font-family:'Liberation Sans', sans-serif;font-size:21.43px;line-height:1;white-space:pre;color:#3f5aa8;font-weight:normal;font-style:normal;opacity:.9;">0</div>
<svg style="position:absolute;left:0px;top:0px;" width="2942" height="560" viewBox="0 0 2942 560"><path d="M760.0 515.0 L779.0 515.0 L781.0 219.9 L782.4 219.3 L783.8 217.4 L785.1 213.2 L786.5 216.2 L787.9 214.9 L789.2 213.2 L790.6 215.7 L792.0 211.8 L793.4 209.8 L794.8 207.4 L796.1 212.5 L797.5 209.7 L798.9 210.6 L800.2 203.3 L801.6 203.3 L803.0 204.0 L805.0 377.0 L806.3 378.9 L807.7 373.0 L809.0 372.4 L810.3 373.4 L811.7 373.0 L813.0 374.8 L814.3 375.0 L815.7 372.2 L817.0 374.9 L818.3 374.3 L819.7 374.1 L821.0 375.4 L822.3 373.1 L823.7 373.4 L825.0 371.3 L826.3 373.2 L827.7 372.6 L829.0 373.5 L830.3 372.7 L831.7 374.0 L833.0 373.8 L834.0 515.0 L893.0 515.0 L897.5 222.3 L898.9 223.4 L900.3 216.2 L901.6 215.4 L903.0 215.9 L904.4 216.1 L905.8 218.7 L907.2 218.6 L908.6 217.2 L909.9 218.3 L911.3 211.3 L912.7 212.7 L913.6 379.4 L914.9 379.4 L916.3 376.2 L917.6 378.2 L919.0 374.4 L920.3 374.4 L921.7 378.5 L923.0 376.7 L924.4 372.2 L925.7 374.5 L927.1 371.7 L928.4 375.0 L929.8 376.9 L931.1 373.9 L932.5 373.1 L933.8 376.0 L935.2 377.1 L936.5 375.8 L937.9 372.3 L939.2 373.6 L940.6 377.2 L941.9 376.6 L943.3 377.5 L944.6 377.8 L946.0 373.7 L947.3 375.4 L948.0 515.0 L1009.0 515.0 L1010.5 223.1 L1012.0 226.1 L1013.5 222.9 L1015.0 224.0 L1016.5 226.4 L1018.0 221.7 L1019.5 223.9 L1020.0 383.4 L1021.3 385.1 L1022.6 381.8 L1023.9 384.3 L1025.2 382.2 L1026.5 383.0 L1027.8 382.2 L1029.2 377.9 L1030.5 378.4 L1031.8 380.8 L1033.1 377.2 L1034.4 380.5 L1035.7 379.1 L1037.0 376.3 L1038.3 377.5 L1039.6 380.6 L1040.9 375.7 L1042.2 380.0 L1043.5 379.8 L1044.8 377.0 L1046.2 379.5 L1047.5 379.8 L1048.8 381.1 L1050.1 381.0 L1051.4 378.3 L1052.7 380.2 L1054.0 378.3 L1055.3 379.6 L1056.6 379.2 L1057.9 376.4 L1059.2 379.1 L1060.5 378.7 L1061.9 377.1 L1063.2 381.0 L1064.5 381.2 L1065.8 377.0 L1067.1 377.6 L1068.4 380.8 L1069.7 379.4 L1071.0 515.0 L1072.0 515.0 L1074.0 379.4 L1080.4 379.4 L1081.0 515.0 L1124.0 515.0 L1125.5 223.9 L1126.8 226.1 L1128.1 220.8 L1129.4 218.6 L1130.8 224.6 L1132.1 217.5 L1133.4 217.6 L1134.7 219.5 L1136.0 219.9 L1137.0 381.0 L1138.3 381.0 L1139.6 382.3 L1141.0 382.2 L1142.3 376.5 L1143.6 380.1 L1144.9 377.0 L1146.2 379.0 L1147.6 375.4 L1148.9 376.2 L1150.2 377.4 L1151.5 378.1 L1152.8 375.2 L1154.2 378.9 L1155.5 378.1 L1156.8 376.3 L1158.1 374.8 L1159.4 376.2 L1160.8 378.1 L1162.1 374.6 L1163.4 378.7 L1164.7 379.8 L1166.0 378.5 L1167.4 377.6 L1168.7 379.8 L1170.0 379.2 L1171.3 378.2 L1172.6 377.2 L1174.0 379.7 L1175.3 378.5 L1176.6 377.8 L1177.6 515.0 L1239.0 515.0 L1240.5 223.9 L1241.8 219.3 L1243.2 217.3 L1244.5 218.9 L1245.9 217.5 L1247.2 217.2 L1248.6 219.9 L1250.0 219.6 L1251.3 218.6 L1252.7 209.5 L1254.0 211.9 L1255.0 379.4 L1256.3 378.1 L1257.6 376.5 L1258.9 381.6 L1260.2 378.0 L1261.5 378.7 L1262.8 377.2 L1264.1 379.3 L1265.4 375.4 L1266.7 380.4 L1268.0 377.6 L1269.3 376.4 L1270.7 375.3 L1272.0 376.1 L1273.3 376.1 L1274.6 375.4 L1275.9 374.8 L1277.2 378.1 L1278.5 376.4 L1279.8 375.3 L1281.1 375.6 L1282.4 378.2 L1283.7 376.3 L1285.0 376.0 L1286.3 377.8 L1287.6 377.6 L1288.9 379.1 L1290.2 378.1 L1291.5 378.1 L1292.8 381.2 L1294.1 378.2 L1295.4 376.3 L1296.7 377.1 L1298.0 378.1 L1299.3 380.1 L1300.7 378.3 L1302.0 379.3 L1303.3 380.2 L1304.6 378.1 L1305.9 382.4 L1307.2 378.8 L1308.5 383.0 L1309.8 379.9 L1311.1 380.7 L1312.4 382.3 L1313.7 379.8 L1315.0 381.0 L1316.0 515.0 L1353.4 515.0 L1355.0 227.9 L1356.3 226.3 L1357.7 223.7 L1359.0 219.4 L1360.3 223.7 L1361.7 224.2 L1363.0 220.1 L1364.3 215.2 L1365.7 217.7 L1367.0 213.5 L1369.0 380.2 L1370.3 381.5 L1371.6 376.9 L1373.0 377.7 L1374.3 378.4 L1375.6 375.4 L1376.9 378.0 L1378.2 375.6 L1379.5 377.7 L1380.9 375.8 L1382.2 373.8 L1383.5 373.3 L1384.8 373.6 L1386.1 376.4 L1387.5 375.4 L1388.8 377.0 L1390.1 378.1 L1391.4 376.2 L1392.7 374.4 L1394.1 374.4 L1395.4 375.2 L1396.7 374.0 L1398.0 377.8 L1399.3 378.5 L1400.6 377.0 L1402.0 378.1 L1403.3 378.5 L1404.6 377.0 L1406.0 515.0 L1467.7 515.0 L1470.0 212.7 L1471.4 214.5 L1472.8 213.7 L1474.2 215.9 L1475.5 218.5 L1476.9 214.9 L1478.3 214.7 L1479.7 219.9 L1480.0 383.4 L1481.3 382.8 L1482.7 384.1 L1484.0 383.5 L1485.3 378.0 L1486.7 381.8 L1488.0 377.2 L1489.3 377.2 L1490.7 377.8 L1492.0 374.2 L1493.3 377.7 L1494.7 377.0 L1496.0 375.1 L1497.3 377.4 L1498.7 372.8 L1500.0 376.0 L1501.3 376.4 L1502.7 376.9 L1504.0 373.5 L1505.3 374.4 L1506.7 373.3 L1508.0 373.1 L1509.3 372.1 L1510.7 371.2 L1512.0 372.6 L1513.3 375.2 L1514.7 373.6 L1516.0 375.1 L1517.3 376.0 L1518.7 373.3 L1520.0 373.0 L1521.0 515.0 L1581.7 515.0 L1584.0 211.9 L1585.3 211.9 L1586.7 218.5 L1588.0 219.5 L1589.3 220.7 L1590.7 219.5 L1592.0 223.1 L1593.0 383.4 L1594.3 382.8 L1595.6 381.8 L1596.9 380.5 L1598.2 382.1 L1599.6 379.4 L1600.9 378.2 L1602.2 382.3 L1603.5 377.1 L1604.8 377.8 L1606.1 380.6 L1607.4 378.5 L1608.8 377.6 L1610.1 376.1 L1611.4 379.1 L1612.7 378.1 L1614.0 376.4 L1615.3 376.9 L1616.6 376.2 L1617.9 378.9 L1619.2 377.9 L1620.6 380.5 L1621.9 377.6 L1623.2 377.1 L1624.5 378.2 L1625.8 377.8 L1627.1 380.7 L1628.4 376.9 L1629.8 376.5 L1631.1 376.6 L1632.4 379.1 L1633.7 377.7 L1635.0 379.4 L1636.0 515.0 L1697.7 515.0 L1699.0 240.7 L1700.3 243.3 L1701.7 239.2 L1703.0 243.9 L1704.5 388.2 L1706.4 388.2 L1707.0 515.0 L1713.5 515.0 L1714.5 387.4 L1716.0 387.4 L1717.0 515.0 L1724.5 515.0 L1725.5 385.0 L1729.0 385.0 L1730.0 515.0 L1744.5 515.0 L1745.5 385.0 L1749.0 385.0 L1750.0 515.0 L1811.6 515.0 L1813.5 235.1 L1814.8 232.2 L1816.2 236.9 L1817.5 235.9 L1818.0 388.2 L1819.3 389.7 L1820.7 386.9 L1822.0 385.5 L1823.3 383.4 L1824.6 384.2 L1826.0 385.9 L1827.3 380.7 L1828.6 384.1 L1830.0 379.1 L1831.3 381.8 L1832.6 380.1 L1833.9 377.0 L1835.3 380.4 L1836.6 380.3 L1837.9 378.1 L1839.3 376.8 L1840.6 376.0 L1841.9 376.7 L1843.2 375.1 L1844.6 377.5 L1845.9 374.8 L1847.2 379.5 L1848.6 378.6 L1849.9 376.8 L1851.2 378.0 L1852.5 375.4 L1853.9 375.8 L1855.2 376.3 L1856.5 374.3 L1857.9 375.8 L1859.2 377.0 L1860.5 376.5 L1861.8 373.8 L1863.2 373.3 L1864.5 375.4 L1865.0 515.0 L1955.0 515.0 L1957.0 177.7 L1958.3 181.5 L1959.6 177.2 L1960.9 177.4 L1962.2 182.6 L1963.5 183.5 L1964.8 188.0 L1966.2 186.4 L1967.5 187.9 L1968.8 188.3 L1970.1 194.7 L1971.4 187.7 L1972.7 193.0 L1974.0 194.4 L1975.0 373.8 L1976.4 373.7 L1977.8 370.7 L1979.1 371.3 L1980.5 371.9 L1981.9 371.4 L1983.3 375.5 L1984.7 373.4 L1986.0 374.7 L1987.4 372.3 L1988.8 375.4 L1990.0 515.0 L2069.4 515.0 L2071.0 184.8 L2072.3 182.0 L2073.7 188.5 L2075.0 187.6 L2076.3 191.5 L2077.7 189.6 L2079.0 187.1 L2080.3 187.2 L2081.7 191.8 L2083.0 194.0 L2084.4 196.0 L2085.7 193.1 L2087.0 191.2 L2088.4 199.1 L2089.7 194.2 L2091.0 201.7 L2092.4 201.0 L2093.7 199.2 L2094.5 375.4 L2095.9 376.0 L2097.3 372.4 L2098.7 375.5 L2100.0 376.5 L2101.4 376.1 L2102.8 377.8 L2104.0 515.0 L2156.0 515.0 L2157.5 221.5 L2158.9 224.8 L2160.4 219.1 L2161.8 224.2 L2163.2 220.6 L2164.7 222.7 L2166.1 223.0 L2167.6 219.9 L2169.0 219.9 L2170.0 381.8 L2171.3 381.5 L2172.7 381.1 L2174.0 380.3 L2175.4 378.9 L2176.7 380.3 L2178.1 379.4 L2179.4 376.3 L2180.8 375.6 L2182.1 375.5 L2183.5 373.5 L2184.8 374.8 L2186.2 373.4 L2187.5 376.9 L2188.8 374.1 L2190.2 373.7 L2191.5 373.2 L2192.9 376.5 L2194.2 376.5 L2195.6 373.1 L2196.9 377.0 L2198.3 372.7 L2199.6 373.3 L2201.0 377.5 L2202.3 376.9 L2203.7 374.2 L2205.0 376.8 L2206.4 377.7 L2207.7 375.4 L2209.0 515.0 L2270.0 515.0 L2271.5 219.9 L2272.9 217.2 L2274.2 221.0 L2275.6 218.0 L2277.0 224.0 L2278.4 221.8 L2279.8 219.5 L2281.1 225.6 L2282.5 221.5 L2283.5 381.8 L2284.8 383.0 L2286.1 379.8 L2287.4 378.0 L2288.8 377.1 L2290.1 381.4 L2291.4 378.7 L2292.7 376.7 L2294.0 377.7 L2295.3 376.1 L2296.7 378.4 L2298.0 379.1 L2299.3 379.0 L2300.6 379.4 L2301.9 376.6 L2303.2 376.9 L2304.6 376.6 L2305.9 379.0 L2307.2 378.9 L2308.5 378.8 L2309.8 375.3 L2311.2 374.6 L2312.5 375.0 L2313.8 379.7 L2315.1 379.9 L2316.4 375.0 L2317.7 377.8 L2319.1 376.2 L2320.4 378.7 L2321.7 378.0 L2323.0 377.8 L2324.0 515.0 L2385.8 515.0 L2387.0 227.9 L2388.4 226.4 L2389.8 225.9 L2391.2 223.0 L2392.7 226.9 L2394.1 219.5 L2395.5 219.9 L2396.5 383.4 L2397.8 381.0 L2399.2 384.2 L2400.5 382.2 L2401.8 380.1 L2403.1 381.4 L2404.5 382.1 L2405.8 381.8 L2407.1 379.3 L2408.4 381.6 L2409.8 376.2 L2411.1 376.6 L2412.4 377.2 L2413.7 376.4 L2415.1 377.7 L2416.4 379.0 L2417.7 378.0 L2419.0 378.6 L2420.4 376.0 L2421.7 377.0 L2423.0 380.1 L2424.3 376.6 L2425.7 377.5 L2427.0 377.4 L2428.3 377.3 L2429.6 379.6 L2431.0 376.9 L2432.3 377.1 L2433.6 378.2 L2434.9 377.8 L2436.3 377.9 L2437.6 379.4 L2438.6 515.0 L2500.3 515.0 L2502.0 216.7 L2503.4 217.1 L2504.8 213.8 L2506.1 219.1 L2507.5 216.2 L2508.9 214.6 L2510.3 218.2 L2511.7 214.7 L2513.0 211.7 L2514.4 211.3 L2515.8 211.9 L2517.0 381.8 L2518.3 382.6 L2519.7 377.9 L2521.0 378.7 L2522.3 379.8 L2523.6 377.2 L2525.0 377.0 L2526.3 376.5 L2527.6 376.5 L2528.9 372.6 L2530.3 374.6 L2531.6 374.3 L2532.9 374.0 L2534.2 372.8 L2535.6 378.1 L2536.9 374.8 L2538.2 374.1 L2539.6 376.8 L2540.9 376.0 L2542.2 377.9 L2543.5 377.1 L2544.9 376.1 L2546.2 377.7 L2547.5 376.8 L2548.8 373.2 L2550.2 375.2 L2551.5 375.4 L2553.0 515.0 L2613.6 515.0 L2615.0 229.5 L2616.3 229.9 L2617.7 226.4 L2619.0 230.3 L2620.4 227.1 L2621.7 231.9 L2622.5 387.4 L2623.8 385.8 L2625.1 384.1 L2626.4 387.3 L2627.7 383.6 L2629.0 381.9 L2630.4 385.1 L2631.7 379.3 L2633.0 382.8 L2634.3 380.3 L2635.6 381.2 L2636.9 378.5 L2638.2 377.5 L2639.5 380.5 L2640.8 375.4 L2642.1 378.2 L2643.4 377.5 L2644.8 377.0 L2646.1 378.1 L2647.4 378.5 L2648.7 376.3 L2650.0 376.7 L2651.3 378.1 L2652.6 375.6 L2653.9 377.8 L2655.2 379.3 L2656.5 377.8 L2657.8 378.8 L2659.1 378.1 L2660.5 374.6 L2661.8 376.5 L2663.1 373.6 L2664.4 374.3 L2665.7 378.1 L2667.0 375.4 L2668.0 515.0 L2757.7 515.0 L2759.0 183.2 L2760.3 180.4 L2761.7 182.3 L2763.0 191.5 L2764.3 185.7 L2765.7 191.3 L2767.0 192.4 L2768.4 189.6 L2769.7 197.5 L2771.0 196.5 L2772.4 194.4 L2773.7 197.7 L2775.1 201.5 L2776.4 198.5 L2777.7 201.4 L2779.1 204.8 L2780.4 207.2 L2781.0 376.2 L2782.4 377.0 L2783.9 372.8 L2785.3 373.8 L2786.7 375.8 L2788.1 377.4 L2789.6 375.4 L2791.0 376.2 L2792.0 515.0 L2872.0 515.0 L2873.5 197.6 L2874.8 201.9 L2876.2 200.1 L2877.5 199.1 L2878.8 202.0 L2880.1 204.7 L2881.4 202.9 L2882.8 205.3 L2884.1 203.1 L2885.4 206.3 L2886.8 203.2 L2888.1 204.6 L2889.4 207.5 L2890.7 212.8 L2892.0 214.9 L2893.4 209.1 L2894.7 213.5 L2895.5 378.6 L2897.0 375.7 L2898.4 375.2 L2899.9 376.7 L2901.3 377.9 L2902.8 376.2 L2904.2 377.6 L2905.7 378.6 L2906.7 515.0 L2942.0 515.0" fill="none" stroke="#3f56a6" stroke-width="2" stroke-linejoin="round"/></svg>
<div style="position:absolute;left:760px;top:559px;width:2182px;height:386px;background:#f8f8f8;"></div>
<div style="position:absolute;left:760px;top:944.5px;width:2182px;height:2.0px;background:#c9d5e8;"></div>
<div style="position:absolute;left:758px;top:559px;width:2px;height:386px;background:#9c5f3b;"></div>
<div style="position:absolute;left:721.23px;top:591.65px;font-family:'Liberation Sans', sans-serif;font-size:25.34px;line-height:1;white-space:pre;color:#9c5f3b;font-weight:normal;font-style:normal;opacity:.9;">15</div>
<div style="position:absolute;left:721.23px;top:713.85px;font-family:'Liberation Sans', sans-serif;font-size:25.34px;line-height:1;white-space:pre;color:#9c5f3b;font-weight:normal;font-style:normal;opacity:.9;">10</div>
<div style="position:absolute;left:737.12px;top:838.98px;font-family:'Liberation Sans', sans-serif;font-size:21.88px;line-height:1;white-space:pre;color:#9c5f3b;font-weight:normal;font-style:normal;opacity:.9;">5</div>
<svg style="position:absolute;left:0px;top:0px;" width="2942" height="960" viewBox="0 0 2942 960"><path d="M759 703.5 L781 703.5 L781 705 L895 705 L895 703 L1010 703 L1010 659 L1125 659 L1125 703.5 L1240 703.5 L1240 582 L1354 582 L1354 703.5 L1468 703.5 L1468 705 L1583 705 L1583 703 L1698 703 L1698 921 L1813 921 L1813 704 L1956 704 L1956 802 L2070 802 L2070 798 L2157 798 L2157 705 L2271 705 L2271 703.5 L2386 703.5 L2386 705 L2500 705 L2500 703 L2615 703 L2615 705 L2758 705 L2758 798.4 L2873 798.4 L2873 799.7 L2942 799.7" fill="none" stroke="#9c5f3b" stroke-width="2"/></svg>
<div style="position:absolute;left:906.20px;top:965.23px;font-family:'Liberation Sans', sans-serif;font-size:23.00px;line-height:1;white-space:pre;color:#7b8a93;font-weight:normal;font-style:normal;">Mar 26</div>
<div style="position:absolute;left:1135.50px;top:965.23px;font-family:'Liberation Sans', sans-serif;font-size:23.00px;line-height:1;white-space:pre;color:#7b8a93;font-weight:normal;font-style:normal;">Mar 28</div>
<div style="position:absolute;left:1364.90px;top:965.23px;font-family:'Liberation Sans', sans-serif;font-size:23.00px;line-height:1;white-space:pre;color:#7b8a93;font-weight:normal;font-style:normal;">Mar 30</div>
<div style="position:absolute;left:1603.04px;top:965.23px;font-family:'Liberation Sans', sans-serif;font-size:23.00px;line-height:1;white-space:pre;color:#7b8a93;font-weight:normal;font-style:normal;">Apr 1</div>
<div style="position:absolute;left:1832.93px;top:965.23px;font-family:'Liberation Sans', sans-serif;font-size:23.00px;line-height:1;white-space:pre;color:#7b8a93;font-weight:normal;font-style:normal;">Apr 3</div>
<div style="position:absolute;left:2061.93px;top:965.23px;font-family:'Liberation Sans', sans-serif;font-size:23.00px;line-height:1;white-space:pre;color:#7b8a93;font-weight:normal;font-style:normal;">Apr 5</div>
<div style="position:absolute;left:2291.04px;top:965.23px;font-family:'Liberation Sans', sans-serif;font-size:23.00px;line-height:1;white-space:pre;color:#7b8a93;font-weight:normal;font-style:normal;">Apr 7</div>
<div style="position:absolute;left:2520.34px;top:965.23px;font-family:'Liberation Sans', sans-serif;font-size:23.00px;line-height:1;white-space:pre;color:#7b8a93;font-weight:normal;font-style:normal;">Apr 9</div>
<div style="position:absolute;left:2743.70px;top:965.23px;font-family:'Liberation Sans', sans-serif;font-size:23.00px;line-height:1;white-space:pre;color:#7b8a93;font-weight:normal;font-style:normal;">Apr 11</div>
<svg style="position:absolute;left:737px;top:1001px;" width="22" height="29" viewBox="0 0 22 29"><path d="M8.2 0.7 L13.9 0.7 L13.9 16 L20.3 16 L11 28.3 L0.8 16 L8.2 16Z" fill="#007a5e"/></svg>
<div style="position:absolute;left:773.87px;top:1005.25px;font-family:'Liberation Sans', sans-serif;font-size:21.08px;line-height:1;white-space:pre;color:#007a5e;font-weight:normal;font-style:normal;">3/24/2019 9:48 AM <span style="text-decoration:underline;text-underline-offset:3px;">EDT</span></div>
<svg style="position:absolute;left:1893px;top:1001px;" width="30" height="29" viewBox="0 0 30 29"><path d="M1.3 14.4 L15 1.3 L15 27.6Z M15 14.4 L28.7 1.3 L28.7 27.6Z" fill="#007a5e" stroke="#007a5e" stroke-width="1.5" stroke-linejoin="round"/></svg>
<svg style="position:absolute;left:1952px;top:1001px;" width="17" height="29" viewBox="0 0 17 29"><path d="M1.3 14.4 L14.9 1.3 L14.9 27.6Z" fill="#007a5e" stroke="#007a5e" stroke-width="1.5" stroke-linejoin="round"/></svg>
<div style="position:absolute;left:1995.92px;top:1004.06px;font-family:'Liberation Sans', sans-serif;font-size:21.54px;line-height:1;white-space:pre;color:#007a5e;font-weight:normal;font-style:normal;">24.3 days</div>
<svg style="position:absolute;left:2117px;top:1001px;" width="17" height="29" viewBox="0 0 17 29"><path d="M1.3 1.3 L15.2 14.4 L1.3 27.6Z" fill="#007a5e" stroke="#007a5e" stroke-width="1.5" stroke-linejoin="round"/></svg>
<svg style="position:absolute;left:2162px;top:1001px;" width="31" height="29" viewBox="0 0 31 29"><path d="M1.5 1.3 L15.2 14.4 L1.5 27.6Z M15.2 1.3 L28.9 14.4 L15.2 27.6Z" fill="#007a5e" stroke="#007a5e" stroke-width="1.5" stroke-linejoin="round"/></svg>
<svg style="position:absolute;left:2220px;top:1001px;" width="20" height="30" viewBox="0 0 20 30"><path d="M1.3 1.3 L14 14.4 L1.3 27.8Z" fill="#007a5e" stroke="#007a5e" stroke-width="1.5" stroke-linejoin="round"/><rect x="13.4" y="0.6" width="5.2" height="28.4" rx="1" fill="#007a5e"/></svg>
<svg style="position:absolute;left:2271px;top:1006px;" width="21" height="19" viewBox="0 0 21 19"><path d="M17.5 6.5 A8 8 0 0 0 3.2 7" fill="none" stroke="#007a5e" stroke-width="3.2"/><path d="M20 0.5 L20 9 L11.5 9Z" fill="#007a5e"/><path d="M3 12.3 A8 8 0 0 0 17.3 12" fill="none" stroke="#007a5e" stroke-width="3.2"/><path d="M0.5 18.5 L0.5 10 L9 10Z" fill="#007a5e"/></svg>
<div style="position:absolute;left:722px;top:1042px;width:2220px;height:2px;background:#e0e0e0;"></div>
<div style="position:absolute;left:722px;top:1044px;width:2220px;height:128px;background:#f4f4f4;"></div>
<div style="position:absolute;left:780px;top:1058px;width:2162px;height:28px;background:#fff;"></div>
<div style="position:absolute;left:780px;top:1058px;width:2162px;height:4px;background:#007a5e;"></div>
<div style="position:absolute;left:780px;top:1082px;width:2162px;height:4px;background:#007a5e;"></div>
<div style="position:absolute;left:772px;top:1052px;width:10.5px;height:40px;box-sizing:border-box;background:#007a5e;"></div>
<div style="position:absolute;left:776px;top:1056px;width:2.6000000000000227px;height:32px;background:#fff;"></div>
<div style="position:absolute;left:843.6px;top:1086px;width:2.0px;height:6px;background:#cfcfcf;"></div>
<div style="position:absolute;left:814.62px;top:1094.82px;font-family:'Liberation Sans', sans-serif;font-size:19.00px;line-height:1;white-space:pre;color:#9a9a9a;font-weight:normal;font-style:normal;">Mar 25</div>
<div style="position:absolute;left:1022.84px;top:1086px;width:2.0000000000001137px;height:6px;background:#cfcfcf;"></div>
<div style="position:absolute;left:993.95px;top:1094.82px;font-family:'Liberation Sans', sans-serif;font-size:19.00px;line-height:1;white-space:pre;color:#9a9a9a;font-weight:normal;font-style:normal;">Mar 27</div>
<div style="position:absolute;left:1202.08px;top:1086px;width:2.0px;height:6px;background:#cfcfcf;"></div>
<div style="position:absolute;left:1173.19px;top:1094.82px;font-family:'Liberation Sans', sans-serif;font-size:19.00px;line-height:1;white-space:pre;color:#9a9a9a;font-weight:normal;font-style:normal;">Mar 29</div>
<div style="position:absolute;left:1381.3200000000002px;top:1086px;width:2.0px;height:6px;background:#cfcfcf;"></div>
<div style="position:absolute;left:1352.43px;top:1094.82px;font-family:'Liberation Sans', sans-serif;font-size:19.00px;line-height:1;white-space:pre;color:#9a9a9a;font-weight:normal;font-style:normal;">Mar 31</div>
<div style="position:absolute;left:1470.94px;top:1086px;width:2.0px;height:6px;background:#cfcfcf;"></div>
<div style="position:absolute;left:1442.57px;top:1094.82px;font-family:'Liberation Sans', sans-serif;font-size:19.00px;line-height:1;white-space:pre;color:#9a9a9a;font-weight:normal;font-style:normal;">Apr '19</div>
<div style="position:absolute;left:1650.18px;top:1086px;width:2.0px;height:6px;background:#cfcfcf;"></div>
<div style="position:absolute;left:1628.82px;top:1094.82px;font-family:'Liberation Sans', sans-serif;font-size:19.00px;line-height:1;white-space:pre;color:#9a9a9a;font-weight:normal;font-style:normal;">Apr 3</div>
<div style="position:absolute;left:1829.42px;top:1086px;width:2.0px;height:6px;background:#cfcfcf;"></div>
<div style="position:absolute;left:1808.06px;top:1094.82px;font-family:'Liberation Sans', sans-serif;font-size:19.00px;line-height:1;white-space:pre;color:#9a9a9a;font-weight:normal;font-style:normal;">Apr 5</div>
<div style="position:absolute;left:2008.6599999999999px;top:1086px;width:2.0px;height:6px;background:#cfcfcf;"></div>
<div style="position:absolute;left:1987.39px;top:1094.82px;font-family:'Liberation Sans', sans-serif;font-size:19.00px;line-height:1;white-space:pre;color:#9a9a9a;font-weight:normal;font-style:normal;">Apr 7</div>
<div style="position:absolute;left:2187.9px;top:1086px;width:2.0px;height:6px;background:#cfcfcf;"></div>
<div style="position:absolute;left:2166.63px;top:1094.82px;font-family:'Liberation Sans', sans-serif;font-size:19.00px;line-height:1;white-space:pre;color:#9a9a9a;font-weight:normal;font-style:normal;">Apr 9</div>
<div style="position:absolute;left:2367.14px;top:1086px;width:2.0px;height:6px;background:#cfcfcf;"></div>
<div style="position:absolute;left:2341.29px;top:1094.82px;font-family:'Liberation Sans', sans-serif;font-size:19.00px;line-height:1;white-space:pre;color:#9a9a9a;font-weight:normal;font-style:normal;">Apr 11</div>
<div style="position:absolute;left:2546.38px;top:1086px;width:2.0px;height:6px;background:#cfcfcf;"></div>
<div style="position:absolute;left:2519.73px;top:1094.82px;font-family:'Liberation Sans', sans-serif;font-size:19.00px;line-height:1;white-space:pre;color:#9a9a9a;font-weight:normal;font-style:normal;">Apr 13</div>
<div style="position:absolute;left:2725.62px;top:1086px;width:2.0px;height:6px;background:#cfcfcf;"></div>
<div style="position:absolute;left:2698.97px;top:1094.82px;font-family:'Liberation Sans', sans-serif;font-size:19.00px;line-height:1;white-space:pre;color:#9a9a9a;font-weight:normal;font-style:normal;">Apr 15</div>
<div style="position:absolute;left:2904.86px;top:1086px;width:2.0px;height:6px;background:#cfcfcf;"></div>
<div style="position:absolute;left:2878.31px;top:1094.82px;font-family:'Liberation Sans', sans-serif;font-size:19.00px;line-height:1;white-space:pre;color:#9a9a9a;font-weight:normal;font-style:normal;">Apr 17</div>
<svg style="position:absolute;left:737px;top:1131px;" width="22" height="30" viewBox="0 0 22 30"><path d="M8.2 29.3 L13.9 29.3 L13.9 13.5 L20.3 13.5 L11 1 L0.8 13.5 L8.2 13.5Z" fill="#007a5e"/></svg>
<div style="position:absolute;left:773.82px;top:1139.17px;font-family:'Liberation Sans', sans-serif;font-size:22.60px;line-height:1;white-space:pre;color:#007a5e;font-weight:normal;font-style:normal;">3/24/2019</div>
<div style="position:absolute;left:2117.18px;top:1138.03px;font-family:'Liberation Sans', sans-serif;font-size:23.11px;line-height:1;white-space:pre;color:#007a5e;font-weight:normal;font-style:normal;">1 month</div>
<div style="position:absolute;left:722px;top:1172px;width:2206px;height:52px;background:#007a5e;"></div>
<div style="position:absolute;left:722px;top:1224px;width:2206px;height:363px;background:#fff;"></div>
<div style="position:absolute;left:2928px;top:1172px;width:14px;height:415px;background:#f4f4f4;border-left:2px solid #d0d0d0;box-sizing:border-box;"></div>
<svg style="position:absolute;left:2931px;top:1413px;" width="10" height="17" viewBox="0 0 10 17"><rect x="1" y="0.5" width="3" height="15.5" fill="#8a8a8a"/><rect x="6.2" y="0.5" width="3" height="15.5" fill="#8a8a8a"/></svg>
<svg style="position:absolute;left:740px;top:1186px;" width="33" height="25" viewBox="0 0 33 25"><path d="M2 0 L2 22.5 L32 22.5" fill="none" stroke="#fff" stroke-width="2.4"/><path d="M5.5 20 L5.5 12 L11.5 6 L17 11.5 L23 3.5 L28.5 11 L28.5 20Z" fill="#fff"/></svg>
<div style="position:absolute;left:776.03px;top:1187.40px;font-family:'Liberation Sans', sans-serif;font-size:24.57px;line-height:1;white-space:pre;color:#fff;font-weight:normal;font-style:normal;">Details</div>
<div style="position:absolute;left:2767.5px;top:1176.6px;width:150.0999999999999px;height:42.80000000000018px;box-sizing:border-box;background:#fff;border:2px solid #d4d4d4;border-radius:7px;"></div>
<svg style="position:absolute;left:2779px;top:1185px;" width="27" height="27" viewBox="0 0 27 27"><circle cx="8.6" cy="12.4" r="6.6" fill="#333"/><rect x="7.10" y="4.00" width="3.0" height="2.6" fill="#333" transform="rotate(0.0 8.6 12.4)"/><rect x="7.10" y="4.00" width="3.0" height="2.6" fill="#333" transform="rotate(45.0 8.6 12.4)"/><rect x="7.10" y="4.00" width="3.0" height="2.6" fill="#333" transform="rotate(90.0 8.6 12.4)"/><rect x="7.10" y="4.00" width="3.0" height="2.6" fill="#333" transform="rotate(135.0 8.6 12.4)"/><rect x="7.10" y="4.00" width="3.0" height="2.6" fill="#333" transform="rotate(180.0 8.6 12.4)"/><rect x="7.10" y="4.00" width="3.0" height="2.6" fill="#333" transform="rotate(225.0 8.6 12.4)"/><rect x="7.10" y="4.00" width="3.0" height="2.6" fill="#333" transform="rotate(270.0 8.6 12.4)"/><rect x="7.10" y="4.00" width="3.0" height="2.6" fill="#333" transform="rotate(315.0 8.6 12.4)"/><circle cx="8.6" cy="12.4" r="3.3" fill="#fff"/><circle cx="21.1" cy="5.2" r="3.6" fill="#333"/><rect x="20.15" y="0.60" width="1.9" height="1.8" fill="#333" transform="rotate(0.0 21.1 5.2)"/><rect x="20.15" y="0.60" width="1.9" height="1.8" fill="#333" transform="rotate(60.0 21.1 5.2)"/><rect x="20.15" y="0.60" width="1.9" height="1.8" fill="#333" transform="rotate(120.0 21.1 5.2)"/><rect x="20.15" y="0.60" width="1.9" height="1.8" fill="#333" transform="rotate(180.0 21.1 5.2)"/><rect x="20.15" y="0.60" width="1.9" height="1.8" fill="#333" transform="rotate(240.0 21.1 5.2)"/><rect x="20.15" y="0.60" width="1.9" height="1.8" fill="#333" transform="rotate(300.0 21.1 5.2)"/><circle cx="21.1" cy="5.2" r="1.6" fill="#fff"/><circle cx="21.1" cy="19.2" r="3.6" fill="#333"/><rect x="20.15" y="14.60" width="1.9" height="1.8" fill="#333" transform="rotate(0.0 21.1 19.2)"/><rect x="20.15" y="14.60" width="1.9" height="1.8" fill="#333" transform="rotate(60.0 21.1 19.2)"/><rect x="20.15" y="14.60" width="1.9" height="1.8" fill="#333" transform="rotate(120.0 21.1 19.2)"/><rect x="20.15" y="14.60" width="1.9" height="1.8" fill="#333" transform="rotate(180.0 21.1 19.2)"/><rect x="20.15" y="14.60" width="1.9" height="1.8" fill="#333" transform="rotate(240.0 21.1 19.2)"/><rect x="20.15" y="14.60" width="1.9" height="1.8" fill="#333" transform="rotate(300.0 21.1 19.2)"/><circle cx="21.1" cy="19.2" r="1.6" fill="#fff"/></svg>
<div style="position:absolute;left:2809.78px;top:1188.77px;font-family:'Liberation Sans', sans-serif;font-size:20.36px;line-height:1;white-space:pre;color:#333;font-weight:normal;font-style:normal;">Customize</div>
<div style="position:absolute;left:722px;top:1276px;width:2206px;height:4px;background:#dedede;"></div>
<svg style="position:absolute;left:872px;top:1245px;" width="19" height="19" viewBox="0 0 19 19"><path d="M2.5 2.5 L16.5 16.5 M16.5 2.5 L2.5 16.5" stroke="#777" stroke-width="4.6" stroke-linecap="round"/></svg>
<div style="position:absolute;left:913px;top:1243px;width:19.5px;height:19.799999999999955px;box-sizing:border-box;border:2.2px solid #333;border-radius:4px;"></div>
<svg style="position:absolute;left:1009px;top:1243px;" width="17" height="22" viewBox="0 0 17 22"><path d="M8 0.5 L15.5 8.5 L0.5 8.5Z M0.5 12.8 L15.5 12.8 L8 20.8Z" fill="#777"/></svg>
<div style="position:absolute;left:1045.31px;top:1241.40px;font-family:'Liberation Sans', sans-serif;font-size:24.93px;line-height:1;white-space:pre;color:#333;font-weight:normal;font-style:normal;">Name</div>
<svg style="position:absolute;left:1126px;top:1243px;" width="17" height="22" viewBox="0 0 17 22"><path d="M8 0.5 L15.5 8.5 L0.5 8.5Z M0.5 12.8 L15.5 12.8 L8 20.8Z" fill="#777"/></svg>
<div style="position:absolute;left:2582.30px;top:1242.74px;font-family:'Liberation Sans', sans-serif;font-size:23.22px;line-height:1;white-space:pre;color:#333;font-weight:normal;font-style:normal;">Assets</div>
<div style="position:absolute;left:2664.31px;top:1241.32px;font-family:'Liberation Sans', sans-serif;font-size:24.90px;line-height:1;white-space:pre;color:#007a5e;font-weight:normal;font-style:normal;">Lane</div>
<svg style="position:absolute;left:2733px;top:1243px;" width="18" height="10" viewBox="0 0 18 10"><path d="M9 0.5 L17 9 L1 9Z" fill="#007a5e"/></svg>
<svg style="position:absolute;left:2881px;top:1235px;" width="30" height="25" viewBox="0 0 30 25"><g fill="none" stroke="#333" stroke-width="1.8"><rect x="1" y="1" width="20" height="19"/><path d="M1 7.3 L21 7.3 M1 13.6 L21 13.6 M7.6 1 L7.6 20 M14.3 1 L14.3 20"/></g><circle cx="21.5" cy="16" r="7.6" fill="#333" stroke="#fff" stroke-width="1.4"/><path d="M21.5 11.8 L21.5 20.2 M17.3 16 L25.7 16" stroke="#fff" stroke-width="2.6"/></svg>
<div style="position:absolute;left:722px;top:1280px;width:2206px;height:45px;background:#f9f9f9;"></div>
<div style="position:absolute;left:722px;top:1325px;width:2206px;height:2px;background:#dedede;"></div>
<svg style="position:absolute;left:782px;top:1292px;" width="25" height="25" viewBox="0 0 25 25"><path d="M24 0.3 C18 0.5 13.5 3 9.5 7.5 L5 7.5 L0.2 12.6 L5.5 13.4 L4.6 15 L9.5 19.8 L11.1 18.9 L11.9 24.2 L17 19.4 L17 15 C21.5 11 24 6.5 24 0.3Z" fill="#007a5e"/><circle cx="18.8" cy="5.6" r="1.9" fill="#f9f9f9"/></svg>
<svg style="position:absolute;left:831px;top:1289px;" width="24" height="24" viewBox="0 0 24 24"><circle cx="12" cy="11.8" r="11.1" fill="#007a5e"/><rect x="9.8" y="2.8" width="4.2" height="3.6" fill="#fff"/><path d="M7.8 8.5 L14 8.5 L14 17.2 L16 17.2 L16 20.2 L7.8 20.2 L7.8 17.2 L9.8 17.2 L9.8 11.5 L7.8 11.5Z" fill="#fff"/></svg>
<svg style="position:absolute;left:872px;top:1292px;" width="19" height="19" viewBox="0 0 19 19"><path d="M2.8 2.8 L16.2 16.2 M16.2 2.8 L2.8 16.2" stroke="#007a5e" stroke-width="5" stroke-linecap="round"/></svg>
<div style="position:absolute;left:913px;top:1291.7px;width:19.600000000000023px;height:20.09999999999991px;box-sizing:border-box;border:2.2px solid #333;border-radius:4px;"></div>
<svg style="position:absolute;left:956px;top:1285px;" width="31" height="29" viewBox="0 0 31 29"><path d="M2.3 17.8 L7.4 3 L11.5 20.6 L16.7 8.9 L22 26.5 L27.4 18 L29 22.8" fill="none" stroke="#3f56a6" stroke-width="3.4" stroke-linejoin="round" stroke-linecap="round"/></svg>
<div style="position:absolute;left:999.35px;top:1293.54px;font-family:'Liberation Sans', sans-serif;font-size:22.52px;line-height:1;white-space:pre;color:#333;font-weight:normal;font-style:normal;">kW</div>
<div style="position:absolute;left:1046.07px;top:1291.71px;font-family:'Liberation Sans', sans-serif;font-size:24.67px;line-height:1;white-space:pre;color:#333;font-weight:normal;font-style:normal;">Compressor Power</div>
<div style="position:absolute;left:2582.30px;top:1293.36px;font-family:'Liberation Sans', sans-serif;font-size:22.03px;line-height:1;white-space:pre;color:#007a5e;font-weight:normal;font-style:normal;"><span style="text-decoration:underline;text-underline-offset:3px;">Area A</span></div>
<div style="position:absolute;left:2731.92px;top:1293.38px;font-family:'Liberation Sans', sans-serif;font-size:22.00px;line-height:1;white-space:pre;color:#333;font-weight:normal;font-style:normal;">1</div>
<div style="position:absolute;left:722px;top:1327px;width:2206px;height:45px;background:#fff;"></div>
<div style="position:absolute;left:722px;top:1372px;width:2206px;height:2px;background:#dedede;"></div>
<svg style="position:absolute;left:729px;top:1336px;overflow:visible;" width="28" height="22" viewBox="0 0 28 22"><path d="M13 2 L5 2 Q1.8 2 1.8 5.2 L1.8 16.6 Q1.8 19.8 5 19.8 L16.6 19.8 Q19.8 19.8 19.8 16.6 L19.8 12" fill="none" stroke="#007a5e" stroke-width="2.2"/><path d="M8.6 15.2 L9.4 11 L21.6 -1.2 L25.6 2.8 L13.4 15Z" fill="#007a5e"/><path d="M10.6 11.6 L20.4 1.8" stroke="#fff" stroke-width="0.9"/></svg>
<svg style="position:absolute;left:782px;top:1339px;" width="25" height="25" viewBox="0 0 25 25"><path d="M24 0.3 C18 0.5 13.5 3 9.5 7.5 L5 7.5 L0.2 12.6 L5.5 13.4 L4.6 15 L9.5 19.8 L11.1 18.9 L11.9 24.2 L17 19.4 L17 15 C21.5 11 24 6.5 24 0.3Z" fill="#007a5e"/><circle cx="18.8" cy="5.6" r="1.9" fill="#fff"/></svg>
<svg style="position:absolute;left:831px;top:1336px;" width="24" height="24" viewBox="0 0 24 24"><circle cx="12" cy="11.8" r="11.1" fill="#007a5e"/><rect x="9.8" y="2.8" width="4.2" height="3.6" fill="#fff"/><path d="M7.8 8.5 L14 8.5 L14 17.2 L16 17.2 L16 20.2 L7.8 20.2 L7.8 17.2 L9.8 17.2 L9.8 11.5 L7.8 11.5Z" fill="#fff"/></svg>
<svg style="position:absolute;left:872px;top:1339px;" width="19" height="19" viewBox="0 0 19 19"><path d="M2.8 2.8 L16.2 16.2 M16.2 2.8 L2.8 16.2" stroke="#007a5e" stroke-width="5" stroke-linecap="round"/></svg>
<div style="position:absolute;left:913px;top:1338.7px;width:19.600000000000023px;height:20.09999999999991px;box-sizing:border-box;border:2.2px solid #333;border-radius:4px;"></div>
<svg style="position:absolute;left:956px;top:1332px;" width="31" height="29" viewBox="0 0 31 29"><path d="M2.3 17.8 L7.4 3 L11.5 20.6 L16.7 8.9 L22 26.5 L27.4 18 L29 22.8" fill="none" stroke="#9c5f3b" stroke-width="3.4" stroke-linejoin="round" stroke-linecap="round"/></svg>
<div style="position:absolute;left:1000.18px;top:1340.98px;font-family:'Liberation Sans', sans-serif;font-size:22.00px;line-height:1;white-space:pre;color:#333;font-weight:normal;font-style:normal;">h</div>
<div style="position:absolute;left:1046.06px;top:1338.65px;font-family:'Liberation Sans', sans-serif;font-size:24.75px;line-height:1;white-space:pre;color:#333;font-weight:normal;font-style:normal;">Cycle Duration</div>
<div style="position:absolute;left:2582.30px;top:1340.36px;font-family:'Liberation Sans', sans-serif;font-size:22.03px;line-height:1;white-space:pre;color:#007a5e;font-weight:normal;font-style:normal;"><span style="text-decoration:underline;text-underline-offset:3px;">Area A</span></div>
<div style="position:absolute;left:2732.14px;top:1340.38px;font-family:'Liberation Sans', sans-serif;font-size:22.00px;line-height:1;white-space:pre;color:#333;font-weight:normal;font-style:normal;">2</div>
<div style="position:absolute;left:722px;top:1374px;width:2206px;height:45px;background:#f9f9f9;"></div>
<div style="position:absolute;left:722px;top:1419px;width:2206px;height:2px;background:#dedede;"></div>
<svg style="position:absolute;left:729px;top:1383px;overflow:visible;" width="28" height="22" viewBox="0 0 28 22"><path d="M13 2 L5 2 Q1.8 2 1.8 5.2 L1.8 16.6 Q1.8 19.8 5 19.8 L16.6 19.8 Q19.8 19.8 19.8 16.6 L19.8 12" fill="none" stroke="#007a5e" stroke-width="2.2"/><path d="M8.6 15.2 L9.4 11 L21.6 -1.2 L25.6 2.8 L13.4 15Z" fill="#007a5e"/><path d="M10.6 11.6 L20.4 1.8" stroke="#fff" stroke-width="0.9"/></svg>
<svg style="position:absolute;left:782px;top:1386px;" width="25" height="25" viewBox="0 0 25 25"><path d="M24 0.3 C18 0.5 13.5 3 9.5 7.5 L5 7.5 L0.2 12.6 L5.5 13.4 L4.6 15 L9.5 19.8 L11.1 18.9 L11.9 24.2 L17 19.4 L17 15 C21.5 11 24 6.5 24 0.3Z" fill="#007a5e"/><circle cx="18.8" cy="5.6" r="1.9" fill="#f9f9f9"/></svg>
<svg style="position:absolute;left:831px;top:1383px;" width="24" height="24" viewBox="0 0 24 24"><circle cx="12" cy="11.8" r="11.1" fill="#007a5e"/><rect x="9.8" y="2.8" width="4.2" height="3.6" fill="#fff"/><path d="M7.8 8.5 L14 8.5 L14 17.2 L16 17.2 L16 20.2 L7.8 20.2 L7.8 17.2 L9.8 17.2 L9.8 11.5 L7.8 11.5Z" fill="#fff"/></svg>
<svg style="position:absolute;left:872px;top:1386px;" width="19" height="19" viewBox="0 0 19 19"><path d="M2.8 2.8 L16.2 16.2 M16.2 2.8 L2.8 16.2" stroke="#007a5e" stroke-width="5" stroke-linecap="round"/></svg>
<div style="position:absolute;left:913px;top:1385.7px;width:19.600000000000023px;height:20.09999999999991px;box-sizing:border-box;border:2.2px solid #333;border-radius:4px;"></div>
<svg style="position:absolute;left:960px;top:1381px;overflow:visible;" width="23" height="28" viewBox="0 0 21 26"><rect x="0" y="0" width="9.6" height="26" rx="1.6" fill="#078c45"/><rect x="11.4" y="0" width="9.6" height="26" rx="1.6" fill="#078c45"/><path d="M0 13.5 L1.5 17 L4.5 4 L7.5 22.5 L10.2 13.5 L12.5 17 L15.3 4 L18.3 22.5 L21 13.5" fill="none" stroke="#fff" stroke-width="1.3"/></svg>
<div style="position:absolute;left:1047.30px;top:1386.99px;font-family:'Liberation Sans', sans-serif;font-size:23.17px;line-height:1;white-space:pre;color:#333;font-weight:normal;font-style:normal;">Weeks</div>
<div style="position:absolute;left:722px;top:1421px;width:2206px;height:45px;background:#fff;"></div>
<svg style="position:absolute;left:729px;top:1430px;overflow:visible;" width="28" height="22" viewBox="0 0 28 22"><path d="M13 2 L5 2 Q1.8 2 1.8 5.2 L1.8 16.6 Q1.8 19.8 5 19.8 L16.6 19.8 Q19.8 19.8 19.8 16.6 L19.8 12" fill="none" stroke="#007a5e" stroke-width="2.2"/><path d="M8.6 15.2 L9.4 11 L21.6 -1.2 L25.6 2.8 L13.4 15Z" fill="#007a5e"/><path d="M10.6 11.6 L20.4 1.8" stroke="#fff" stroke-width="0.9"/></svg>
<svg style="position:absolute;left:782px;top:1433px;" width="25" height="25" viewBox="0 0 25 25"><path d="M24 0.3 C18 0.5 13.5 3 9.5 7.5 L5 7.5 L0.2 12.6 L5.5 13.4 L4.6 15 L9.5 19.8 L11.1 18.9 L11.9 24.2 L17 19.4 L17 15 C21.5 11 24 6.5 24 0.3Z" fill="#007a5e"/><circle cx="18.8" cy="5.6" r="1.9" fill="#fff"/></svg>
<svg style="position:absolute;left:831px;top:1430px;" width="24" height="24" viewBox="0 0 24 24"><circle cx="12" cy="11.8" r="11.1" fill="#007a5e"/><rect x="9.8" y="2.8" width="4.2" height="3.6" fill="#fff"/><path d="M7.8 8.5 L14 8.5 L14 17.2 L16 17.2 L16 20.2 L7.8 20.2 L7.8 17.2 L9.8 17.2 L9.8 11.5 L7.8 11.5Z" fill="#fff"/></svg>
<svg style="position:absolute;left:872px;top:1433px;" width="19" height="19" viewBox="0 0 19 19"><path d="M2.8 2.8 L16.2 16.2 M16.2 2.8 L2.8 16.2" stroke="#007a5e" stroke-width="5" stroke-linecap="round"/></svg>
<div style="position:absolute;left:913px;top:1432.7px;width:19.600000000000023px;height:20.09999999999991px;box-sizing:border-box;border:2.2px solid #333;border-radius:4px;"></div>
<svg style="position:absolute;left:960px;top:1428px;overflow:visible;" width="23" height="28" viewBox="0 0 21 26"><rect x="0" y="0" width="9.6" height="26" rx="1.6" fill="#d0561f"/><rect x="11.4" y="0" width="9.6" height="26" rx="1.6" fill="#d0561f"/><path d="M0 13.5 L1.5 17 L4.5 4 L7.5 22.5 L10.2 13.5 L12.5 17 L15.3 4 L18.3 22.5 L21 13.5" fill="none" stroke="#fff" stroke-width="1.3"/></svg>
<div style="position:absolute;left:1046.05px;top:1432.50px;font-family:'Liberation Sans', sans-serif;font-size:24.93px;line-height:1;white-space:pre;color:#333;font-weight:normal;font-style:normal;">Compressor Running</div>
<div style="position:absolute;left:2582.30px;top:1434.36px;font-family:'Liberation Sans', sans-serif;font-size:22.03px;line-height:1;white-space:pre;color:#007a5e;font-weight:normal;font-style:normal;"><span style="text-decoration:underline;text-underline-offset:3px;">Area A</span></div>
</div>
</body></html>
